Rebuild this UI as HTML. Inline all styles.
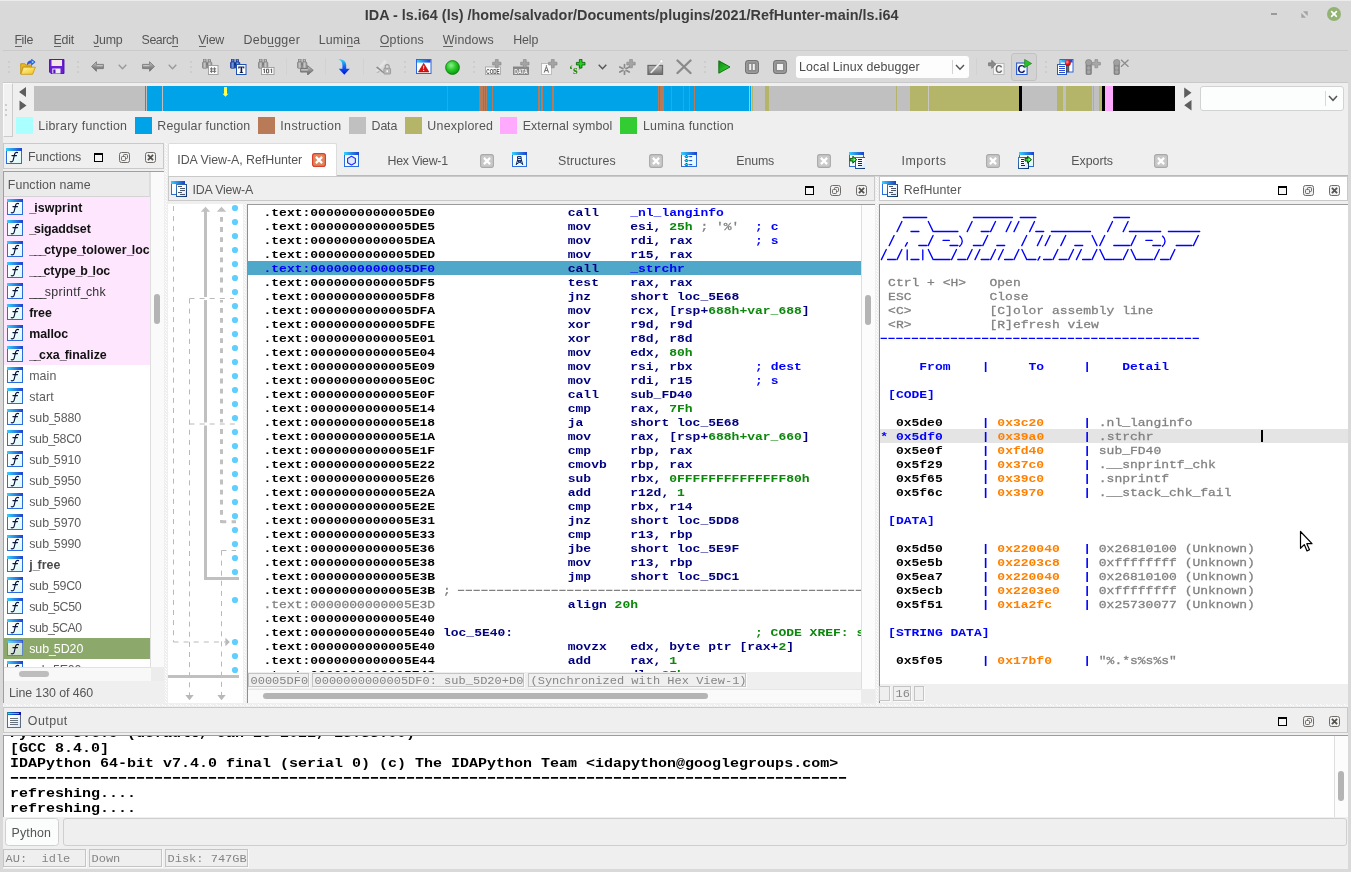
<!DOCTYPE html><html lang="en"><head><meta charset="utf-8"><title>IDA</title><style>
html,body{margin:0;padding:0}
body{width:1351px;height:872px;position:relative;overflow:hidden;background:#d9d9d9;font-family:"Liberation Sans",sans-serif;font-size:12.4px;color:#555}
div,.t,svg,pre{position:absolute;box-sizing:border-box}
.t{white-space:pre}
pre{margin:0;font-family:"Liberation Mono",monospace;font-weight:bold;white-space:pre}
pre b{font-weight:bold}
pre i{font-style:normal;font-weight:normal}
.m{font-family:"Liberation Mono",monospace;white-space:pre}
.dotv{background:linear-gradient(#fff 0 1px,transparent 1px) 1px 0/1px 3px repeat-y,linear-gradient(#fff 0 1px,transparent 1px) 2px 1px/1px 3px repeat-y,#efefef}
.doth{background:linear-gradient(90deg,#fff 0 1px,transparent 1px) 0 2px/6px 1px repeat-x,linear-gradient(90deg,#fff 0 1px,transparent 1px) 3px 1px/6px 1px repeat-x,linear-gradient(90deg,#fff 0 1px,transparent 1px) 4px 2px/6px 1px repeat-x,#efefef}
.sb{border:1px solid #c4c4c4;box-shadow:1px 1px 0 #fafafa;color:#858585;font-family:"Liberation Mono",monospace;font-size:12px;line-height:14px;white-space:pre;overflow:hidden}
.sb span{position:absolute;left:1.5px;line-height:14px;transform:scaleY(.87);transform-origin:0 100%}
</style></head><body><div id="root" style="left:0;top:0;width:1351px;height:872px;will-change:transform">
<div style="left:0px;top:0px;width:1351px;height:1px;background:#ececec"></div>
<span class="t" style="left:364.8px;top:6.3px;line-height:18px;font-size:14.4px;color:#3c3c3c;font-weight:bold;">IDA - ls.i64 (ls) /home/salvador/Documents/plugins/2021/RefHunter-main/ls.i64</span>
<div style="left:1270.5px;top:13px;width:6.5px;height:2px;background:#9a9a9a"></div>
<svg style="left:1300.5px;top:10.5px" width="7" height="7" viewBox="0 0 7 7"><path d="M2 0.3h4.7v4.7z M0.3 2v4.7h4.7z" fill="#a2a2a2"/></svg>
<svg style="left:1327px;top:6.5px" width="14" height="14" viewBox="0 0 14 14"><circle cx="7" cy="7" r="7" fill="#92b372"/><path d="M4.6 4.6l4.8 4.8M9.4 4.6l-4.8 4.8" stroke="#fff" stroke-width="1.6" stroke-linecap="round"/></svg>
<span class="t" style="left:14.4px;top:31.5px;line-height:16px;font-size:12.4px;color:#555;letter-spacing:-0.360px;">File</span>
<div style="left:15.1px;top:46px;width:6.43763px;height:1px;background:#666"></div>
<span class="t" style="left:53.5px;top:31.5px;line-height:16px;font-size:12.4px;color:#555;letter-spacing:-0.189px;">Edit</span>
<div style="left:54.2px;top:46px;width:7.03051px;height:1px;background:#666"></div>
<span class="t" style="left:93px;top:31.5px;line-height:16px;font-size:12.4px;color:#555;letter-spacing:-0.207px;">Jump</span>
<div style="left:93.7px;top:46px;width:5.27px;height:1px;background:#666"></div>
<span class="t" style="left:141.6px;top:31.5px;line-height:16px;font-size:12.4px;color:#555;letter-spacing:-0.457px;">Search</span>
<div style="left:172.404px;top:46px;width:5.86123px;height:1px;background:#666"></div>
<span class="t" style="left:198.3px;top:31.5px;line-height:16px;font-size:12.4px;color:#555;letter-spacing:-0.217px;">View</span>
<div style="left:199px;top:46px;width:7.03051px;height:1px;background:#666"></div>
<span class="t" style="left:243.6px;top:31.5px;line-height:16px;font-size:12.4px;color:#555;letter-spacing:0.249px;">Debugger</span>
<div style="left:267.793px;top:46px;width:5.86123px;height:1px;background:#666"></div>
<span class="t" style="left:318.7px;top:31.5px;line-height:16px;font-size:12.4px;color:#555;letter-spacing:0.187px;">Lumina</span>
<div style="left:347.022px;top:46px;width:5.86123px;height:1px;background:#666"></div>
<span class="t" style="left:379.7px;top:31.5px;line-height:16px;font-size:12.4px;color:#555;letter-spacing:0.228px;">Options</span>
<div style="left:380.4px;top:46px;width:8.19814px;height:1px;background:#666"></div>
<span class="t" style="left:442.7px;top:31.5px;line-height:16px;font-size:12.4px;color:#555;letter-spacing:0.133px;">Windows</span>
<div style="left:443.4px;top:46px;width:9.94877px;height:1px;background:#666"></div>
<span class="t" style="left:513.2px;top:31.5px;line-height:16px;font-size:12.4px;color:#555;letter-spacing:-0.134px;">Help</span>
<div style="left:3px;top:50px;width:1345px;height:1px;background:#cacaca"></div>
<div style="left:3px;top:82px;width:1345px;height:1px;background:#c9c9c9"></div>
<div style="left:3px;top:83px;width:1345px;height:786px;background:#efefef"></div>
<div style="left:3px;top:83px;width:9.5px;height:53.5px;background:#f1f1f1;border:1px solid #fbfbfb;border-right-color:#cbcbcb;border-bottom-color:#cbcbcb"></div>
<div style="left:5px;top:104px;width:2px;height:2px;background:#cccccc"></div>
<div style="left:5px;top:109px;width:2px;height:2px;background:#cccccc"></div>
<div style="left:5px;top:114px;width:2px;height:2px;background:#cccccc"></div>
<svg width="0" height="0" style="left:0;top:0"><defs>
<linearGradient id="gTitle" x1="0" y1="0" x2="1" y2="0"><stop offset="0" stop-color="#30d4ff"/><stop offset="0.5" stop-color="#2a86e4"/><stop offset="1" stop-color="#1c3fd0"/></linearGradient>
<linearGradient id="gTitleD" x1="0" y1="0" x2="1" y2="0"><stop offset="0" stop-color="#0a9aa8"/><stop offset="0.4" stop-color="#0a50c8"/><stop offset="1" stop-color="#0a10a0"/></linearGradient>
<linearGradient id="gIn" x1="0" y1="0" x2="1" y2="1"><stop offset="0.2" stop-color="#ffffff"/><stop offset="1" stop-color="#d8f8fa"/></linearGradient>
<linearGradient id="gInS" x1="0" y1="0" x2="1" y2="1"><stop offset="0.2" stop-color="#e6efdc"/><stop offset="1" stop-color="#c4dcc8"/></linearGradient>
<linearGradient id="gDoc" x1="0" y1="0" x2="1" y2="1"><stop offset="0.3" stop-color="#ffffff"/><stop offset="1" stop-color="#d6e6fc"/></linearGradient>
<linearGradient id="gDocB" x1="0" y1="0" x2="1" y2="1"><stop offset="0" stop-color="#3c78c0"/><stop offset="1" stop-color="#0c346c"/></linearGradient>
<linearGradient id="gFold" x1="0" y1="0" x2="1" y2="1"><stop offset="0" stop-color="#fff6a0"/><stop offset="1" stop-color="#f2c21c"/></linearGradient>
<linearGradient id="gGrey" x1="0" y1="0" x2="0" y2="1"><stop offset="0" stop-color="#b8b8b8"/><stop offset="1" stop-color="#6e6e6e"/></linearGradient>
<linearGradient id="gGreyH" x1="0" y1="0" x2="0" y2="1"><stop offset="0" stop-color="#cfcfcf"/><stop offset="0.55" stop-color="#8c8c8c"/><stop offset="1" stop-color="#6a6a6a"/></linearGradient>
<linearGradient id="gBlueArr" x1="0" y1="0" x2="0" y2="1"><stop offset="0" stop-color="#38d8f0"/><stop offset="0.5" stop-color="#1060f0"/><stop offset="1" stop-color="#0010e0"/></linearGradient>
<radialGradient id="gGreen" cx="0.4" cy="0.35" r="0.7"><stop offset="0" stop-color="#8cf08c"/><stop offset="0.5" stop-color="#28c828"/><stop offset="1" stop-color="#0a900a"/></radialGradient>
<radialGradient id="gRed" cx="0.4" cy="0.35" r="0.7"><stop offset="0" stop-color="#ff9a9a"/><stop offset="0.5" stop-color="#f01818"/><stop offset="1" stop-color="#a00000"/></radialGradient>
<linearGradient id="gPlay" x1="0" y1="0" x2="1" y2="1"><stop offset="0" stop-color="#0a8a0a"/><stop offset="1" stop-color="#3ee03e"/></linearGradient>
<linearGradient id="gBino" x1="0" y1="0" x2="1" y2="0"><stop offset="0" stop-color="#8a8a8a"/><stop offset="0.5" stop-color="#c8c8c8"/><stop offset="1" stop-color="#8a8a8a"/></linearGradient>
<linearGradient id="gBinoB" x1="0" y1="0" x2="1" y2="0"><stop offset="0" stop-color="#1a3c9c"/><stop offset="0.5" stop-color="#6fa0e8"/><stop offset="1" stop-color="#1a3c9c"/></linearGradient>
</defs></svg>
<div style="left:8px;top:61px;width:2px;height:2px;background:#cdcdcd"></div>
<div style="left:8px;top:66px;width:2px;height:2px;background:#cdcdcd"></div>
<div style="left:8px;top:71px;width:2px;height:2px;background:#cdcdcd"></div>
<svg style="left:20px;top:59px" width="16" height="16" viewBox="0 0 16 16" ><path d="M0.7 4.7h4.2l1 1.3h5.6v2H3.2L0.7 15z" fill="#e8b820" stroke="#c28c08" stroke-width=".8"/><path d="M3.4 8.2h12L12.6 15.3H0.8z" fill="url(#gFold)" stroke="#c89410" stroke-width=".8"/><path d="M7.3 5.6c0-3 2-4 4.3-3.8V0.2l3.6 2.9-3.6 2.9V4.3C9.8 4 8.6 4.4 7.3 5.6z" fill="#2a5cf0" stroke="#1030b0" stroke-width=".5"/><path d="M11.8 1.5l2.3 1.6-2.3 1.4z" fill="#7fe0ff"/></svg>
<svg style="left:49px;top:59px" width="16" height="15" viewBox="0 0 16 15" ><path d="M0.5 0.5h14.5v14H2L0.5 13z" fill="#6a1ed2" stroke="#4a10a8" stroke-width=".9"/><rect x="2.5" y="1" width="10.5" height="6" fill="#f4e6e6"/><rect x="2.5" y="1" width="10.5" height="6" fill="url(#gSv)"/><rect x="3.3" y="9.5" width="8.2" height="5" fill="#efeaf8"/><rect x="4.3" y="10.5" width="2.2" height="3.8" fill="#5a18c0"/></svg>
<div style="left:76.6px;top:61px;width:2px;height:2px;background:#cdcdcd"></div>
<div style="left:76.6px;top:66px;width:2px;height:2px;background:#cdcdcd"></div>
<div style="left:76.6px;top:71px;width:2px;height:2px;background:#cdcdcd"></div>
<svg style="left:91px;top:61px" width="13" height="11" viewBox="0 0 13 11" ><path d="M0.6 5.5L5.4 0.7v2.7h7v4.2h-7v2.7z" fill="url(#gGreyH)" stroke="#707070" stroke-width=".8"/><path d="M5.8 4.2h6v1h-6z" fill="#d0d0d0"/></svg>
<svg style="left:118.4px;top:64.3px" width="9" height="6" viewBox="0 0 9 6" ><path d="M0.7 0.7l3.8 4 3.8-4" fill="none" stroke="#9a9a9a" stroke-width="1.4"/></svg>
<svg style="left:141.8px;top:61px" width="13" height="11" viewBox="0 0 13 11" ><path d="M12.4 5.5L7.6 0.7v2.7h-7v4.2h7v2.7z" fill="url(#gGreyH)" stroke="#707070" stroke-width=".8"/><path d="M1.2 4.2h6v1h-6z" fill="#d0d0d0"/></svg>
<svg style="left:168.2px;top:64.3px" width="9" height="6" viewBox="0 0 9 6" ><path d="M0.7 0.7l3.8 4 3.8-4" fill="none" stroke="#9a9a9a" stroke-width="1.4"/></svg>
<div style="left:190px;top:61px;width:2px;height:2px;background:#cdcdcd"></div>
<div style="left:190px;top:66px;width:2px;height:2px;background:#cdcdcd"></div>
<div style="left:190px;top:71px;width:2px;height:2px;background:#cdcdcd"></div>
<svg style="left:202px;top:59px" width="17" height="16" viewBox="0 0 17 16" ><rect x="1.5" y="0.5" width="2.6" height="2.5" fill="url(#gBino)" stroke="#7c7c7c" stroke-width=".6"/><rect x="6" y="0.5" width="2.6" height="2.5" fill="url(#gBino)" stroke="#7c7c7c" stroke-width=".6"/><rect x="0.4" y="3" width="4.6" height="6.3" rx="1" fill="url(#gBino)" stroke="#7c7c7c" stroke-width=".7"/><rect x="5.2" y="3" width="4.6" height="6.3" rx="1" fill="url(#gBino)" stroke="#7c7c7c" stroke-width=".7"/><rect x="4.2" y="4" width="1.8" height="2.2" fill="#7c7c7c"/><rect x="6.5" y="6.5" width="9.5" height="9" fill="#fbfbfb" stroke="#9a9a9a" stroke-width=".9"/><path d="M9.4 8.3v5.6M12.6 8.3v5.6M8 9.9h6.2M8 12.3h6.2" stroke="#6a6a6a" stroke-width="1"/></svg>
<svg style="left:230px;top:59px" width="17" height="16" viewBox="0 0 17 16" ><rect x="1.5" y="0.5" width="2.6" height="2.5" fill="url(#gBinoB)" stroke="#16328a" stroke-width=".6"/><rect x="6" y="0.5" width="2.6" height="2.5" fill="url(#gBinoB)" stroke="#16328a" stroke-width=".6"/><rect x="0.4" y="3" width="4.6" height="6.3" rx="1" fill="url(#gBinoB)" stroke="#16328a" stroke-width=".7"/><rect x="5.2" y="3" width="4.6" height="6.3" rx="1" fill="url(#gBinoB)" stroke="#16328a" stroke-width=".7"/><rect x="4.2" y="4" width="1.8" height="2.2" fill="#16328a"/><rect x="6.5" y="5.5" width="9.5" height="10" fill="#fff" stroke="#2050b0" stroke-width="1"/><path d="M8.3 7.5h6v2h-0.8l-.3-1h-1v4.6l1 .3v.7H9.6v-.7l1-.3V8.5h-1l-.3 1H8.3z" fill="#0a1a50"/></svg>
<svg style="left:258px;top:59px" width="17" height="16" viewBox="0 0 17 16" ><rect x="1.5" y="0.5" width="2.6" height="2.5" fill="url(#gBino)" stroke="#7c7c7c" stroke-width=".6"/><rect x="6" y="0.5" width="2.6" height="2.5" fill="url(#gBino)" stroke="#7c7c7c" stroke-width=".6"/><rect x="0.4" y="3" width="4.6" height="6.3" rx="1" fill="url(#gBino)" stroke="#7c7c7c" stroke-width=".7"/><rect x="5.2" y="3" width="4.6" height="6.3" rx="1" fill="url(#gBino)" stroke="#7c7c7c" stroke-width=".7"/><rect x="4.2" y="4" width="1.8" height="2.2" fill="#7c7c7c"/><rect x="3.5" y="8.5" width="12.5" height="7" fill="#fbfbfb" stroke="#9a9a9a" stroke-width=".9"/><path d="M5.4 10.6l1-.6v4M8.5 10.2h2.2v3.6H8.5zM12.6 10.6l1-.6v4" stroke="#5a5a5a" stroke-width="1" fill="none"/></svg>
<div style="left:285.5px;top:58px;width:1px;height:17px;background:#d2d2d2"></div>
<svg style="left:297px;top:59px" width="17" height="16" viewBox="0 0 17 16" ><rect x="1.5" y="0.5" width="2.6" height="2.5" fill="url(#gBino)" stroke="#7c7c7c" stroke-width=".6"/><rect x="6" y="0.5" width="2.6" height="2.5" fill="url(#gBino)" stroke="#7c7c7c" stroke-width=".6"/><rect x="0.4" y="3" width="4.6" height="6.3" rx="1" fill="url(#gBino)" stroke="#7c7c7c" stroke-width=".7"/><rect x="5.2" y="3" width="4.6" height="6.3" rx="1" fill="url(#gBino)" stroke="#7c7c7c" stroke-width=".7"/><rect x="4.2" y="4" width="1.8" height="2.2" fill="#7c7c7c"/><path d="M3.6 9.5h7V6.6l5.6 4.7-5.6 4.7v-2.9h-7z" fill="url(#gGreyH)" stroke="#6c6c6c" stroke-width=".8"/><path d="M4.2 10.4h6.8v1H4.2z" fill="#d6d6d6"/></svg>
<div style="left:324.5px;top:58px;width:1px;height:17px;background:#d2d2d2"></div>
<svg style="left:338px;top:59px" width="13" height="16" viewBox="0 0 13 16" ><path d="M0.3 0.2C4.5 0 7.8 1.5 8.2 6v3.7h3.6L6.3 15.8 0.8 9.7h3.6V6C4.3 3 3 1.3 0.3 0.2z" fill="url(#gBlueArr)"/></svg>
<div style="left:363px;top:58px;width:1px;height:17px;background:#d2d2d2"></div>
<svg style="left:375px;top:59px" width="17" height="16" viewBox="0 0 17 16" ><path d="M9.5 0.5L12 3 3.5 11.5 0.5 12.5z" fill="#e4e4e4"/><path d="M2.5 7.5l7 6.2-1.5.2L1 8.5z" fill="#8a8a8a"/><path d="M1 14l3-1.8.8.9z" fill="#9a9a9a"/><path d="M10.2 9.5V7.6a2 2 0 0 1 4 0v1.9" fill="none" stroke="#9a9a9a" stroke-width="1.1"/><rect x="8.8" y="9.3" width="6.8" height="5.8" rx=".8" fill="#b8b8b8" stroke="#8c8c8c" stroke-width=".7"/><rect x="11.5" y="11.2" width="1.4" height="2" fill="#fff"/></svg>
<div style="left:404px;top:61px;width:2px;height:2px;background:#cdcdcd"></div>
<div style="left:404px;top:66px;width:2px;height:2px;background:#cdcdcd"></div>
<div style="left:404px;top:71px;width:2px;height:2px;background:#cdcdcd"></div>
<svg style="left:416px;top:59px" width="16" height="15" viewBox="0 0 16 15" ><rect x=".5" y=".5" width="14.5" height="14" fill="#fff" stroke="#2a66e0" stroke-width="1"/><rect x="1" y="1" width="13.5" height="2.6" fill="url(#gTitle)"/><path d="M7.7 4.2L13 13H2.4z" fill="#d81010" stroke="#a00000" stroke-width=".5"/><path d="M7.2 6.8h1l-.2 3.4h-.6zM7.2 10.9h1v1h-1z" fill="#fff"/></svg>
<svg style="left:444.5px;top:59.7px" width="15" height="15" viewBox="0 0 15 15" ><circle cx="7.5" cy="7.5" r="6.9" fill="url(#gGreen)" stroke="#087808" stroke-width=".8"/></svg>
<div style="left:473px;top:61px;width:2px;height:2px;background:#cdcdcd"></div>
<div style="left:473px;top:66px;width:2px;height:2px;background:#cdcdcd"></div>
<div style="left:473px;top:71px;width:2px;height:2px;background:#cdcdcd"></div>
<svg style="left:485px;top:59px" width="17" height="16" viewBox="0 0 17 16" ><rect x=".5" y="8" width="15" height="7.5" fill="#fcfcfc" stroke="#a0a0a0" stroke-width=".8"/><path d="M10.4 0.4h2.8v2.8h2.8v2.8h-2.8v2.8h-2.8v-2.8h-2.8v-2.8h2.8z" fill="#a4a4a4" stroke="#858585" stroke-width=".6"/><text x="8" y="14.6" font-family="Liberation Sans" font-weight="bold" font-size="7.2" text-anchor="middle" fill="#505050" textLength="13.4" lengthAdjust="spacingAndGlyphs">CODE</text></svg>
<svg style="left:513px;top:59px" width="17" height="16" viewBox="0 0 17 16" ><rect x=".5" y="8" width="15" height="7.5" fill="#8a8a8a" stroke="#7a7a7a" stroke-width=".8"/><path d="M10.4 0.4h2.8v2.8h2.8v2.8h-2.8v2.8h-2.8v-2.8h-2.8v-2.8h2.8z" fill="#a4a4a4" stroke="#858585" stroke-width=".6"/><text x="8" y="14.6" font-family="Liberation Sans" font-weight="bold" font-size="7.2" text-anchor="middle" fill="#f4f4f4" textLength="13.4" lengthAdjust="spacingAndGlyphs">DATA</text></svg>
<svg style="left:541px;top:59px" width="17" height="16" viewBox="0 0 17 16" ><rect x=".5" y="4.5" width="10" height="11" fill="#fafafa" stroke="#b0b0b0" stroke-width=".8"/><path d="M5.4 6.2v1.2M3.2 13.6l2.2-6 2.2 6M4 11.6h2.8" fill="none" stroke="#6a6a6a" stroke-width="1"/><path d="M10.4 0.4h2.8v2.8h2.8v2.8h-2.8v2.8h-2.8v-2.8h-2.8v-2.8h2.8z" fill="#a4a4a4" stroke="#858585" stroke-width=".6"/></svg>
<svg style="left:569px;top:59px" width="18" height="16" viewBox="0 0 18 16" ><text x="0" y="15" font-family="Liberation Serif" font-weight="bold" font-size="12" fill="#2a8a10">‘s’</text><path d="M10.4 0.4h2.6v3h3v2.6h-3v3h-2.6v-3h-3V3.4h3z" fill="#22d022" stroke="#0a5a0a" stroke-width=".8"/></svg>
<svg style="left:598px;top:64.3px" width="9" height="6" viewBox="0 0 9 6" ><path d="M0.7 0.7l3.8 4 3.8-4" fill="none" stroke="#555" stroke-width="1.4"/></svg>
<svg style="left:619px;top:59px" width="17" height="16" viewBox="0 0 17 16" ><path d="M5.5 5.5v10M0.8 8l9.4 5M0.8 13l9.4-5" stroke="#8a8a8a" stroke-width="1.7" stroke-linecap="round"/><circle cx="5.5" cy="10.5" r="1.2" fill="#d9d9d9"/><path d="M10.6 0.4h2.8v2.8h2.8v2.8h-2.8v2.8h-2.8v-2.8h-2.8v-2.8h2.8z" fill="#a4a4a4" stroke="#858585" stroke-width=".6"/></svg>
<svg style="left:647px;top:59px" width="17" height="16" viewBox="0 0 17 16" ><rect x="1" y="6.5" width="14.5" height="9" fill="url(#gGrey)" stroke="#6a6a6a" stroke-width="1.3"/><path d="M3 13.5L13.5 2l1.5 1.3L4.5 14.2z" fill="#f4f4f4" stroke="#aaa" stroke-width=".4"/><circle cx="14.4" cy="2.2" r="1.5" fill="#fff" stroke="#bbb" stroke-width=".4"/></svg>
<svg style="left:675.5px;top:59px" width="16" height="16" viewBox="0 0 16 16" ><path d="M1.5 1.5l13 12.5M14.5 1.5l-13 12.5" stroke="#8a8a8a" stroke-width="2.3" stroke-linecap="round"/></svg>
<div style="left:704px;top:61px;width:2px;height:2px;background:#cdcdcd"></div>
<div style="left:704px;top:66px;width:2px;height:2px;background:#cdcdcd"></div>
<div style="left:704px;top:71px;width:2px;height:2px;background:#cdcdcd"></div>
<svg style="left:718px;top:60.3px" width="13" height="14" viewBox="0 0 13 14" ><path d="M0.8 0.8v12.4L12 7z" fill="url(#gPlay)" stroke="#0a6a0a" stroke-width=".9" stroke-linejoin="round"/></svg>
<svg style="left:745px;top:60px" width="14" height="14" viewBox="0 0 14 14" ><rect x=".6" y=".6" width="12.8" height="12.8" rx="2.2" fill="#8a8a8a" stroke="#6e6e6e" stroke-width="1"/><rect x="1.8" y="1.8" width="10.4" height="10.4" rx="1.5" fill="none" stroke="#a8a8a8" stroke-width=".9"/><rect x="4.2" y="4" width="2" height="6" fill="#f0f0f0"/><rect x="7.8" y="4" width="2" height="6" fill="#f0f0f0"/></svg>
<svg style="left:773px;top:60px" width="14" height="14" viewBox="0 0 14 14" ><rect x=".6" y=".6" width="12.8" height="12.8" rx="2.2" fill="#8a8a8a" stroke="#6e6e6e" stroke-width="1"/><rect x="1.8" y="1.8" width="10.4" height="10.4" rx="1.5" fill="none" stroke="#a8a8a8" stroke-width=".9"/><rect x="4" y="4" width="6" height="6" fill="#f2f2f2"/></svg>
<div style="left:796px;top:56px;width:173px;height:21.5px;background:#fdfdfd;border-radius:3px"></div>
<span class="t" style="left:799.1px;top:58.7px;line-height:16px;font-size:12.4px;color:#4a4a4a;letter-spacing:0.112px;">Local Linux debugger</span>
<div style="left:951.5px;top:59.5px;width:1px;height:14.5px;background:#d4d4d4"></div>
<svg style="left:955px;top:63.5px" width="10" height="7" viewBox="0 0 10 7" ><path d="M1 1l4 4.2L9 1" fill="none" stroke="#555" stroke-width="1.4"/></svg>
<div style="left:975.5px;top:58px;width:1px;height:17px;background:#d2d2d2"></div>
<svg style="left:988px;top:59px" width="17" height="16" viewBox="0 0 17 16" ><rect x="5.5" y="4.5" width="10.5" height="11" fill="#f6f6f6" stroke="#b0b0b0" stroke-width=".8"/><path d="M0.5 3.8h3.2V1.2L8 5.3 3.7 9.4V6.8H0.5z" fill="#8a8a8a" stroke="#6a6a6a" stroke-width=".6"/><text x="7.2" y="14" font-family="Liberation Sans" font-weight="bold" font-size="10" fill="#6a6a6a">C</text></svg>
<div style="left:1011px;top:53px;width:26px;height:28px;background:#d3d3d3;border:1px solid #c2c2c2;border-radius:3px"></div>
<svg style="left:1016px;top:59px" width="17" height="16" viewBox="0 0 17 16" ><rect x=".6" y="4" width="10.5" height="11.5" fill="#f6f8ff" stroke="#2a5cd0" stroke-width="1.1"/><text x="1.6" y="14" font-family="Liberation Sans" font-weight="bold" font-size="11" fill="#0a1470">C</text><path d="M8.6 0.4v8.3l7-4.2z" fill="#28c028" stroke="#0a7a0a" stroke-width=".6"/></svg>
<div style="left:1045px;top:61px;width:2px;height:2px;background:#cdcdcd"></div>
<div style="left:1045px;top:66px;width:2px;height:2px;background:#cdcdcd"></div>
<div style="left:1045px;top:71px;width:2px;height:2px;background:#cdcdcd"></div>
<svg style="left:1057px;top:59px" width="17" height="16" viewBox="0 0 17 16" ><rect x="3" y=".5" width="13" height="12.5" fill="#fff" stroke="#2a66e0" stroke-width="1"/><rect x="3.5" y="1" width="12" height="2.5" fill="url(#gTitle)"/><rect x=".5" y="5.5" width="9" height="10" fill="#fff" stroke="#2a5cc0" stroke-width="1"/><path d="M2 7.5h6M2 9.5h6M2 11.5h6M2 13.5h6" stroke="#2a4cd0" stroke-width="1" shape-rendering="crispEdges"/><rect x="9.4" y="6" width="2.6" height="7" fill="#666" stroke="#333" stroke-width=".4"/><circle cx="10.8" cy="4" r="3" fill="url(#gRed)"/></svg>
<svg style="left:1085px;top:59px" width="17" height="16" viewBox="0 0 17 16" ><rect x="1" y="5" width="5.4" height="10.5" rx="1" fill="#8a8a8a" stroke="#6e6e6e" stroke-width=".6"/><circle cx="3.7" cy="3.6" r="3.2" fill="#a0a0a0" stroke="#7c7c7c" stroke-width=".6"/><circle cx="3.7" cy="9" r="1.7" fill="#a6a6a6"/><circle cx="3.7" cy="13" r="1.7" fill="#a6a6a6"/><path d="M9.93333 0.6h2.73333v2.73333h2.73333v2.73333h-2.73333v2.73333h-2.73333v-2.73333h-2.73333v-2.73333h2.73333z" fill="#a8a8a8" stroke="#858585" stroke-width=".6"/></svg>
<svg style="left:1113px;top:59px" width="17" height="16" viewBox="0 0 17 16" ><rect x="1" y="5" width="5.4" height="10.5" rx="1" fill="#8a8a8a" stroke="#6e6e6e" stroke-width=".6"/><circle cx="3.7" cy="3.6" r="3.2" fill="#a0a0a0" stroke="#7c7c7c" stroke-width=".6"/><circle cx="3.7" cy="9" r="1.7" fill="#a6a6a6"/><circle cx="3.7" cy="13" r="1.7" fill="#a6a6a6"/><path d="M8 0.8l7.5 7M15.5 0.8l-7.5 7" stroke="#8a8a8a" stroke-width="1.2"/></svg>
<svg style="left:18px;top:86px" width="10" height="26" viewBox="0 0 10 26"><path d="M8 1v10L1 6zM1.5 14.5v10L8.5 19.5z" fill="#5e5e5e"/></svg>
<svg style="left:1183px;top:86px" width="10" height="26" viewBox="0 0 10 26"><path d="M1.2 1.5v10.5L8.5 6.7zM8.5 14v10.6L1.2 19.3z" fill="#5e5e5e"/></svg>
<svg style="left:34px;top:86px" width="1141" height="25" viewBox="0 0 1141 25" shape-rendering="crispEdges"><rect x="0" y="0" width="111" height="25" fill="#c0c0c0"/><rect x="111" y="0" width="1" height="25" fill="#00a2e8"/><rect x="112" y="0" width="1" height="25" fill="#c0c0c0"/><rect x="113" y="0" width="602" height="25" fill="#00a2e8"/><rect x="128" y="0" width="1" height="25" fill="#c0c0c0"/><rect x="413" y="0" width="1" height="25" fill="#b87a57"/><rect x="445" y="0" width="4" height="25" fill="#b87a57"/><rect x="450" y="0" width="1" height="25" fill="#b87a57"/><rect x="452" y="0" width="1" height="25" fill="#b87a57"/><rect x="458" y="0" width="1" height="25" fill="#b87a57"/><rect x="504" y="0" width="2" height="25" fill="#b87a57"/><rect x="507" y="0" width="2" height="25" fill="#b87a57"/><rect x="518" y="0" width="2" height="25" fill="#b87a57"/><rect x="624" y="0" width="1" height="25" fill="#b87a57"/><rect x="626" y="0" width="4" height="25" fill="#b87a57"/><rect x="637" y="0" width="1" height="25" fill="#b87a57"/><rect x="649" y="0" width="1" height="25" fill="#b87a57"/><rect x="655" y="0" width="1" height="25" fill="#b87a57"/><rect x="660" y="0" width="1" height="25" fill="#b87a57"/><rect x="715" y="0" width="161" height="25" fill="#c0c0c0"/><rect x="716" y="0" width="1" height="25" fill="#00a2e8"/><rect x="718" y="0" width="1" height="25" fill="#b5b56a"/><rect x="731" y="0" width="4" height="25" fill="#b5b56a"/><rect x="862" y="0" width="1" height="25" fill="#b5b56a"/><rect x="876" y="0" width="108.7" height="25" fill="#b5b56a"/><rect x="894" y="0" width="1" height="25" fill="#c8c8c0"/><rect x="984.7" y="0" width="3.3" height="25" fill="#000"/><rect x="988" y="0" width="35" height="25" fill="#c0c0c0"/><rect x="1023" y="0" width="6" height="25" fill="#b5b56a"/><rect x="1029" y="0" width="2.7" height="25" fill="#c0c0c0"/><rect x="1031.7" y="0" width="28.3" height="25" fill="#b5b56a"/><rect x="1058.2" y="0" width="0.8" height="25" fill="#c0c0c0"/><rect x="1060" y="0" width="5" height="25" fill="#c0c0c0"/><rect x="1065" y="0" width="2.8" height="25" fill="#b5b56a"/><rect x="1067.8" y="0" width="3.2" height="25" fill="#000"/><rect x="1071" y="0" width="8" height="25" fill="#ffaaff"/><rect x="1079" y="0" width="62" height="25" fill="#000"/></svg>
<svg style="left:222px;top:87px" width="7" height="10" viewBox="0 0 7 10"><path d="M2 0h3v6.8h1.4L3.5 9.8 0.6 6.8H2z" fill="#ffff50"/></svg>
<div style="left:1200px;top:86px;width:144px;height:25px;background:#fcfdfd;border:1px solid #d2d2d2;border-radius:3px"></div>
<div style="left:1325px;top:91px;width:1px;height:15px;background:#d8d8d8"></div>
<svg style="left:1328px;top:94.5px" width="10" height="7" viewBox="0 0 10 7"><path d="M1 1l4 4.3L9 1" fill="none" stroke="#555" stroke-width="1.5"/></svg>
<div style="left:16px;top:117px;width:17px;height:17px;background:#aaffff"></div>
<span class="t" style="left:38.3px;top:118.2px;line-height:16px;font-size:12.4px;color:#555;letter-spacing:0.262px;">Library function</span>
<div style="left:135px;top:117px;width:17px;height:17px;background:#00a2e8"></div>
<span class="t" style="left:157.3px;top:118.2px;line-height:16px;font-size:12.4px;color:#555;letter-spacing:0.180px;">Regular function</span>
<div style="left:258px;top:117px;width:17px;height:17px;background:#b87a57"></div>
<span class="t" style="left:280.3px;top:118.2px;line-height:16px;font-size:12.4px;color:#555;letter-spacing:0.380px;">Instruction</span>
<div style="left:349px;top:117px;width:17px;height:17px;background:#c0c0c0"></div>
<span class="t" style="left:371.6px;top:118.2px;line-height:16px;font-size:12.4px;color:#555;letter-spacing:-0.164px;">Data</span>
<div style="left:405px;top:117px;width:17px;height:17px;background:#b5b56a"></div>
<span class="t" style="left:427.3px;top:118.2px;line-height:16px;font-size:12.4px;color:#555;letter-spacing:0.254px;">Unexplored</span>
<div style="left:500px;top:117px;width:17px;height:17px;background:#ffaaff"></div>
<span class="t" style="left:522.7px;top:118.2px;line-height:16px;font-size:12.4px;color:#555;letter-spacing:0.100px;">External symbol</span>
<div style="left:620px;top:117px;width:17px;height:17px;background:#33cc33"></div>
<span class="t" style="left:642.9px;top:118.2px;line-height:16px;font-size:12.4px;color:#555;letter-spacing:0.240px;">Lumina function</span>
<div style="left:3px;top:143px;width:161px;height:26px;border:1px solid #c9c9c9;background:#efefef"></div>
<svg style="left:6px;top:148px" width="16" height="16" viewBox="0 0 16 16" ><rect x=".5" y=".5" width="15" height="15" fill="url(#gIn)" stroke="#2c6cdc" stroke-width="1"/><rect x="0" y="0" width="16" height="3" fill="url(#gTitle)"/><path d="M11.6 4.6c-1.7-.5-2.7.2-3.1 2L7.2 12.2c-.3 1.3-1.2 1.9-2.9 1.5" fill="none" stroke="#0a1238" stroke-width="1.15" stroke-linecap="round"/><path d="M5.9 7.6h4.6" stroke="#0a1238" stroke-width="1.1" stroke-linecap="round"/></svg>
<span class="t" style="left:28px;top:149.3px;line-height:16px;font-size:12.4px;color:#555;letter-spacing:-0.057px;">Functions</span>
<svg style="left:94px;top:153px" width="9" height="9" viewBox="0 0 9 9" ><rect x=".5" y=".5" width="8" height="8" fill="#f6f6f6" stroke="#000" stroke-width="1"/><rect x="0" y="0" width="9" height="2" fill="#000"/></svg>
<svg style="left:119px;top:152px" width="11" height="11" viewBox="0 0 11 11" ><rect x=".5" y=".5" width="10" height="10" rx="2" fill="#f1f1f1" stroke="#6e6b68" stroke-width="1"/><rect x="4.5" y="2.5" width="4" height="4" rx=".8" fill="none" stroke="#6e6b68" stroke-width="1"/><rect x="2.5" y="4.5" width="4" height="4" rx=".8" fill="#f1f1f1" stroke="#6e6b68" stroke-width="1"/></svg>
<svg style="left:145px;top:152px" width="11" height="11" viewBox="0 0 11 11" ><rect x=".5" y=".5" width="10" height="10" rx="2" fill="#f1f1f1" stroke="#6e6b68" stroke-width="1"/><path d="M2.9 2.9l5.2 5.2M8.1 2.9L2.9 8.1" stroke="#55534f" stroke-width="1.8"/></svg>
<div style="left:3px;top:171px;width:161px;height:533px;background:#fff"></div>
<div style="left:3px;top:171px;width:161px;height:1px;background:#9f9f9f"></div>
<div style="left:3px;top:171px;width:1px;height:533px;background:#9f9f9f"></div>
<div style="left:4px;top:172px;width:146px;height:24.5px;background:#ebebeb;border-bottom:1px solid #d4d4d4;border-right:1px solid #dcdcdc"></div>
<span class="t" style="left:7.8px;top:176.6px;line-height:16px;font-size:12.4px;color:#555;letter-spacing:0.074px;">Function name</span>
<div style="left:4px;top:197px;width:146px;height:168px;background:#fde6fe"></div>
<div style="left:4px;top:197px;width:146px;height:470px;overflow:hidden">
<svg style="left:3px;top:2px" width="16" height="16" viewBox="0 0 16 16" ><rect x=".5" y=".5" width="15" height="15" fill="url(#gIn)" stroke="#2c6cdc" stroke-width="1"/><rect x="0" y="0" width="16" height="3" fill="url(#gTitle)"/><path d="M11.6 4.6c-1.7-.5-2.7.2-3.1 2L7.2 12.2c-.3 1.3-1.2 1.9-2.9 1.5" fill="none" stroke="#0a1238" stroke-width="1.15" stroke-linecap="round"/><path d="M5.9 7.6h4.6" stroke="#0a1238" stroke-width="1.1" stroke-linecap="round"/></svg>
<span class="t" style="left:25.2px;top:2.8px;line-height:16px;font-size:12.4px;color:#111;font-weight:bold;letter-spacing:0.084px;"><span style="letter-spacing:-1.916px">_</span>iswprint</span>
<svg style="left:3px;top:23px" width="16" height="16" viewBox="0 0 16 16" ><rect x=".5" y=".5" width="15" height="15" fill="url(#gIn)" stroke="#2c6cdc" stroke-width="1"/><rect x="0" y="0" width="16" height="3" fill="url(#gTitle)"/><path d="M11.6 4.6c-1.7-.5-2.7.2-3.1 2L7.2 12.2c-.3 1.3-1.2 1.9-2.9 1.5" fill="none" stroke="#0a1238" stroke-width="1.15" stroke-linecap="round"/><path d="M5.9 7.6h4.6" stroke="#0a1238" stroke-width="1.1" stroke-linecap="round"/></svg>
<span class="t" style="left:25.2px;top:23.8px;line-height:16px;font-size:12.4px;color:#111;font-weight:bold;letter-spacing:-0.130px;"><span style="letter-spacing:-2.130px">_</span>sigaddset</span>
<svg style="left:3px;top:44px" width="16" height="16" viewBox="0 0 16 16" ><rect x=".5" y=".5" width="15" height="15" fill="url(#gIn)" stroke="#2c6cdc" stroke-width="1"/><rect x="0" y="0" width="16" height="3" fill="url(#gTitle)"/><path d="M11.6 4.6c-1.7-.5-2.7.2-3.1 2L7.2 12.2c-.3 1.3-1.2 1.9-2.9 1.5" fill="none" stroke="#0a1238" stroke-width="1.15" stroke-linecap="round"/><path d="M5.9 7.6h4.6" stroke="#0a1238" stroke-width="1.1" stroke-linecap="round"/></svg>
<span class="t" style="left:25.2px;top:44.8px;line-height:16px;font-size:12.4px;color:#111;font-weight:bold;letter-spacing:0.091px;"><span style="letter-spacing:-1.909px">_</span><span style="letter-spacing:-1.909px">_</span><span style="letter-spacing:-1.909px">_</span>ctype<span style="letter-spacing:-1.909px">_</span>tolower<span style="letter-spacing:-1.909px">_</span>loc</span>
<svg style="left:3px;top:65px" width="16" height="16" viewBox="0 0 16 16" ><rect x=".5" y=".5" width="15" height="15" fill="url(#gIn)" stroke="#2c6cdc" stroke-width="1"/><rect x="0" y="0" width="16" height="3" fill="url(#gTitle)"/><path d="M11.6 4.6c-1.7-.5-2.7.2-3.1 2L7.2 12.2c-.3 1.3-1.2 1.9-2.9 1.5" fill="none" stroke="#0a1238" stroke-width="1.15" stroke-linecap="round"/><path d="M5.9 7.6h4.6" stroke="#0a1238" stroke-width="1.1" stroke-linecap="round"/></svg>
<span class="t" style="left:25.2px;top:65.8px;line-height:16px;font-size:12.4px;color:#111;font-weight:bold;letter-spacing:-0.097px;"><span style="letter-spacing:-2.097px">_</span><span style="letter-spacing:-2.097px">_</span><span style="letter-spacing:-2.097px">_</span>ctype<span style="letter-spacing:-2.097px">_</span>b<span style="letter-spacing:-2.097px">_</span>loc</span>
<svg style="left:3px;top:86px" width="16" height="16" viewBox="0 0 16 16" ><rect x=".5" y=".5" width="15" height="15" fill="url(#gIn)" stroke="#2c6cdc" stroke-width="1"/><rect x="0" y="0" width="16" height="3" fill="url(#gTitle)"/><path d="M11.6 4.6c-1.7-.5-2.7.2-3.1 2L7.2 12.2c-.3 1.3-1.2 1.9-2.9 1.5" fill="none" stroke="#0a1238" stroke-width="1.15" stroke-linecap="round"/><path d="M5.9 7.6h4.6" stroke="#0a1238" stroke-width="1.1" stroke-linecap="round"/></svg>
<span class="t" style="left:25.2px;top:86.8px;line-height:16px;font-size:12.4px;color:#333;letter-spacing:0.304px;"><span style="letter-spacing:-1.696px">_</span><span style="letter-spacing:-1.696px">_</span><span style="letter-spacing:-1.696px">_</span>sprintf<span style="letter-spacing:-1.696px">_</span>chk</span>
<svg style="left:3px;top:107px" width="16" height="16" viewBox="0 0 16 16" ><rect x=".5" y=".5" width="15" height="15" fill="url(#gIn)" stroke="#2c6cdc" stroke-width="1"/><rect x="0" y="0" width="16" height="3" fill="url(#gTitle)"/><path d="M11.6 4.6c-1.7-.5-2.7.2-3.1 2L7.2 12.2c-.3 1.3-1.2 1.9-2.9 1.5" fill="none" stroke="#0a1238" stroke-width="1.15" stroke-linecap="round"/><path d="M5.9 7.6h4.6" stroke="#0a1238" stroke-width="1.1" stroke-linecap="round"/></svg>
<span class="t" style="left:25.2px;top:107.8px;line-height:16px;font-size:12.4px;color:#111;font-weight:bold;letter-spacing:-0.049px;">free</span>
<svg style="left:3px;top:128px" width="16" height="16" viewBox="0 0 16 16" ><rect x=".5" y=".5" width="15" height="15" fill="url(#gIn)" stroke="#2c6cdc" stroke-width="1"/><rect x="0" y="0" width="16" height="3" fill="url(#gTitle)"/><path d="M11.6 4.6c-1.7-.5-2.7.2-3.1 2L7.2 12.2c-.3 1.3-1.2 1.9-2.9 1.5" fill="none" stroke="#0a1238" stroke-width="1.15" stroke-linecap="round"/><path d="M5.9 7.6h4.6" stroke="#0a1238" stroke-width="1.1" stroke-linecap="round"/></svg>
<span class="t" style="left:25.2px;top:128.8px;line-height:16px;font-size:12.4px;color:#111;font-weight:bold;letter-spacing:-0.036px;">malloc</span>
<svg style="left:3px;top:149px" width="16" height="16" viewBox="0 0 16 16" ><rect x=".5" y=".5" width="15" height="15" fill="url(#gIn)" stroke="#2c6cdc" stroke-width="1"/><rect x="0" y="0" width="16" height="3" fill="url(#gTitle)"/><path d="M11.6 4.6c-1.7-.5-2.7.2-3.1 2L7.2 12.2c-.3 1.3-1.2 1.9-2.9 1.5" fill="none" stroke="#0a1238" stroke-width="1.15" stroke-linecap="round"/><path d="M5.9 7.6h4.6" stroke="#0a1238" stroke-width="1.1" stroke-linecap="round"/></svg>
<span class="t" style="left:25.2px;top:149.8px;line-height:16px;font-size:12.4px;color:#111;font-weight:bold;letter-spacing:0.015px;"><span style="letter-spacing:-1.985px">_</span><span style="letter-spacing:-1.985px">_</span>cxa<span style="letter-spacing:-1.985px">_</span>finalize</span>
<svg style="left:3px;top:170px" width="16" height="16" viewBox="0 0 16 16" ><rect x=".5" y=".5" width="15" height="15" fill="url(#gIn)" stroke="#2c6cdc" stroke-width="1"/><rect x="0" y="0" width="16" height="3" fill="url(#gTitle)"/><path d="M11.6 4.6c-1.7-.5-2.7.2-3.1 2L7.2 12.2c-.3 1.3-1.2 1.9-2.9 1.5" fill="none" stroke="#0a1238" stroke-width="1.15" stroke-linecap="round"/><path d="M5.9 7.6h4.6" stroke="#0a1238" stroke-width="1.1" stroke-linecap="round"/></svg>
<span class="t" style="left:25.2px;top:170.8px;line-height:16px;font-size:12.4px;color:#5c5c5c;letter-spacing:0.075px;">main</span>
<svg style="left:3px;top:191px" width="16" height="16" viewBox="0 0 16 16" ><rect x=".5" y=".5" width="15" height="15" fill="url(#gIn)" stroke="#2c6cdc" stroke-width="1"/><rect x="0" y="0" width="16" height="3" fill="url(#gTitle)"/><path d="M11.6 4.6c-1.7-.5-2.7.2-3.1 2L7.2 12.2c-.3 1.3-1.2 1.9-2.9 1.5" fill="none" stroke="#0a1238" stroke-width="1.15" stroke-linecap="round"/><path d="M5.9 7.6h4.6" stroke="#0a1238" stroke-width="1.1" stroke-linecap="round"/></svg>
<span class="t" style="left:25.2px;top:191.8px;line-height:16px;font-size:12.4px;color:#5c5c5c;letter-spacing:0.121px;">start</span>
<svg style="left:3px;top:212px" width="16" height="16" viewBox="0 0 16 16" ><rect x=".5" y=".5" width="15" height="15" fill="url(#gIn)" stroke="#2c6cdc" stroke-width="1"/><rect x="0" y="0" width="16" height="3" fill="url(#gTitle)"/><path d="M11.6 4.6c-1.7-.5-2.7.2-3.1 2L7.2 12.2c-.3 1.3-1.2 1.9-2.9 1.5" fill="none" stroke="#0a1238" stroke-width="1.15" stroke-linecap="round"/><path d="M5.9 7.6h4.6" stroke="#0a1238" stroke-width="1.1" stroke-linecap="round"/></svg>
<span class="t" style="left:25.2px;top:212.8px;line-height:16px;font-size:12.4px;color:#5c5c5c;letter-spacing:-0.053px;">sub<span style="letter-spacing:-2.053px">_</span>5880</span>
<svg style="left:3px;top:233px" width="16" height="16" viewBox="0 0 16 16" ><rect x=".5" y=".5" width="15" height="15" fill="url(#gIn)" stroke="#2c6cdc" stroke-width="1"/><rect x="0" y="0" width="16" height="3" fill="url(#gTitle)"/><path d="M11.6 4.6c-1.7-.5-2.7.2-3.1 2L7.2 12.2c-.3 1.3-1.2 1.9-2.9 1.5" fill="none" stroke="#0a1238" stroke-width="1.15" stroke-linecap="round"/><path d="M5.9 7.6h4.6" stroke="#0a1238" stroke-width="1.1" stroke-linecap="round"/></svg>
<span class="t" style="left:25.2px;top:233.8px;line-height:16px;font-size:12.4px;color:#5c5c5c;letter-spacing:-0.275px;">sub<span style="letter-spacing:-2.276px">_</span>58C0</span>
<svg style="left:3px;top:254px" width="16" height="16" viewBox="0 0 16 16" ><rect x=".5" y=".5" width="15" height="15" fill="url(#gIn)" stroke="#2c6cdc" stroke-width="1"/><rect x="0" y="0" width="16" height="3" fill="url(#gTitle)"/><path d="M11.6 4.6c-1.7-.5-2.7.2-3.1 2L7.2 12.2c-.3 1.3-1.2 1.9-2.9 1.5" fill="none" stroke="#0a1238" stroke-width="1.15" stroke-linecap="round"/><path d="M5.9 7.6h4.6" stroke="#0a1238" stroke-width="1.1" stroke-linecap="round"/></svg>
<span class="t" style="left:25.2px;top:254.8px;line-height:16px;font-size:12.4px;color:#5c5c5c;letter-spacing:-0.053px;">sub<span style="letter-spacing:-2.053px">_</span>5910</span>
<svg style="left:3px;top:275px" width="16" height="16" viewBox="0 0 16 16" ><rect x=".5" y=".5" width="15" height="15" fill="url(#gIn)" stroke="#2c6cdc" stroke-width="1"/><rect x="0" y="0" width="16" height="3" fill="url(#gTitle)"/><path d="M11.6 4.6c-1.7-.5-2.7.2-3.1 2L7.2 12.2c-.3 1.3-1.2 1.9-2.9 1.5" fill="none" stroke="#0a1238" stroke-width="1.15" stroke-linecap="round"/><path d="M5.9 7.6h4.6" stroke="#0a1238" stroke-width="1.1" stroke-linecap="round"/></svg>
<span class="t" style="left:25.2px;top:275.8px;line-height:16px;font-size:12.4px;color:#5c5c5c;letter-spacing:-0.053px;">sub<span style="letter-spacing:-2.053px">_</span>5950</span>
<svg style="left:3px;top:296px" width="16" height="16" viewBox="0 0 16 16" ><rect x=".5" y=".5" width="15" height="15" fill="url(#gIn)" stroke="#2c6cdc" stroke-width="1"/><rect x="0" y="0" width="16" height="3" fill="url(#gTitle)"/><path d="M11.6 4.6c-1.7-.5-2.7.2-3.1 2L7.2 12.2c-.3 1.3-1.2 1.9-2.9 1.5" fill="none" stroke="#0a1238" stroke-width="1.15" stroke-linecap="round"/><path d="M5.9 7.6h4.6" stroke="#0a1238" stroke-width="1.1" stroke-linecap="round"/></svg>
<span class="t" style="left:25.2px;top:296.8px;line-height:16px;font-size:12.4px;color:#5c5c5c;letter-spacing:-0.053px;">sub<span style="letter-spacing:-2.053px">_</span>5960</span>
<svg style="left:3px;top:317px" width="16" height="16" viewBox="0 0 16 16" ><rect x=".5" y=".5" width="15" height="15" fill="url(#gIn)" stroke="#2c6cdc" stroke-width="1"/><rect x="0" y="0" width="16" height="3" fill="url(#gTitle)"/><path d="M11.6 4.6c-1.7-.5-2.7.2-3.1 2L7.2 12.2c-.3 1.3-1.2 1.9-2.9 1.5" fill="none" stroke="#0a1238" stroke-width="1.15" stroke-linecap="round"/><path d="M5.9 7.6h4.6" stroke="#0a1238" stroke-width="1.1" stroke-linecap="round"/></svg>
<span class="t" style="left:25.2px;top:317.8px;line-height:16px;font-size:12.4px;color:#5c5c5c;letter-spacing:-0.053px;">sub<span style="letter-spacing:-2.053px">_</span>5970</span>
<svg style="left:3px;top:338px" width="16" height="16" viewBox="0 0 16 16" ><rect x=".5" y=".5" width="15" height="15" fill="url(#gIn)" stroke="#2c6cdc" stroke-width="1"/><rect x="0" y="0" width="16" height="3" fill="url(#gTitle)"/><path d="M11.6 4.6c-1.7-.5-2.7.2-3.1 2L7.2 12.2c-.3 1.3-1.2 1.9-2.9 1.5" fill="none" stroke="#0a1238" stroke-width="1.15" stroke-linecap="round"/><path d="M5.9 7.6h4.6" stroke="#0a1238" stroke-width="1.1" stroke-linecap="round"/></svg>
<span class="t" style="left:25.2px;top:338.8px;line-height:16px;font-size:12.4px;color:#5c5c5c;letter-spacing:-0.053px;">sub<span style="letter-spacing:-2.053px">_</span>5990</span>
<svg style="left:3px;top:359px" width="16" height="16" viewBox="0 0 16 16" ><rect x=".5" y=".5" width="15" height="15" fill="url(#gIn)" stroke="#2c6cdc" stroke-width="1"/><rect x="0" y="0" width="16" height="3" fill="url(#gTitle)"/><path d="M11.6 4.6c-1.7-.5-2.7.2-3.1 2L7.2 12.2c-.3 1.3-1.2 1.9-2.9 1.5" fill="none" stroke="#0a1238" stroke-width="1.15" stroke-linecap="round"/><path d="M5.9 7.6h4.6" stroke="#0a1238" stroke-width="1.1" stroke-linecap="round"/></svg>
<span class="t" style="left:25.2px;top:359.8px;line-height:16px;font-size:12.4px;color:#4a4a4a;font-weight:bold;">j<span style="letter-spacing:-1.997px">_</span>free</span>
<svg style="left:3px;top:380px" width="16" height="16" viewBox="0 0 16 16" ><rect x=".5" y=".5" width="15" height="15" fill="url(#gIn)" stroke="#2c6cdc" stroke-width="1"/><rect x="0" y="0" width="16" height="3" fill="url(#gTitle)"/><path d="M11.6 4.6c-1.7-.5-2.7.2-3.1 2L7.2 12.2c-.3 1.3-1.2 1.9-2.9 1.5" fill="none" stroke="#0a1238" stroke-width="1.15" stroke-linecap="round"/><path d="M5.9 7.6h4.6" stroke="#0a1238" stroke-width="1.1" stroke-linecap="round"/></svg>
<span class="t" style="left:25.2px;top:380.8px;line-height:16px;font-size:12.4px;color:#5c5c5c;letter-spacing:-0.275px;">sub<span style="letter-spacing:-2.276px">_</span>59C0</span>
<svg style="left:3px;top:401px" width="16" height="16" viewBox="0 0 16 16" ><rect x=".5" y=".5" width="15" height="15" fill="url(#gIn)" stroke="#2c6cdc" stroke-width="1"/><rect x="0" y="0" width="16" height="3" fill="url(#gTitle)"/><path d="M11.6 4.6c-1.7-.5-2.7.2-3.1 2L7.2 12.2c-.3 1.3-1.2 1.9-2.9 1.5" fill="none" stroke="#0a1238" stroke-width="1.15" stroke-linecap="round"/><path d="M5.9 7.6h4.6" stroke="#0a1238" stroke-width="1.1" stroke-linecap="round"/></svg>
<span class="t" style="left:25.2px;top:401.8px;line-height:16px;font-size:12.4px;color:#5c5c5c;letter-spacing:-0.275px;">sub<span style="letter-spacing:-2.276px">_</span>5C50</span>
<svg style="left:3px;top:422px" width="16" height="16" viewBox="0 0 16 16" ><rect x=".5" y=".5" width="15" height="15" fill="url(#gIn)" stroke="#2c6cdc" stroke-width="1"/><rect x="0" y="0" width="16" height="3" fill="url(#gTitle)"/><path d="M11.6 4.6c-1.7-.5-2.7.2-3.1 2L7.2 12.2c-.3 1.3-1.2 1.9-2.9 1.5" fill="none" stroke="#0a1238" stroke-width="1.15" stroke-linecap="round"/><path d="M5.9 7.6h4.6" stroke="#0a1238" stroke-width="1.1" stroke-linecap="round"/></svg>
<span class="t" style="left:25.2px;top:422.8px;line-height:16px;font-size:12.4px;color:#5c5c5c;letter-spacing:-0.401px;">sub<span style="letter-spacing:-2.401px">_</span>5CA0</span>
<div style="left:0px;top:441px;width:146.5px;height:21px;background:#8ca86a"></div>
<svg style="left:3px;top:443px" width="16" height="16" viewBox="0 0 16 16" ><rect x=".5" y=".5" width="15" height="15" fill="url(#gInS)" stroke="#5e86c4" stroke-width="1"/><rect x="0" y="0" width="16" height="3" fill="url(#gTitle)" opacity=".7"/><path d="M11.6 4.6c-1.7-.5-2.7.2-3.1 2L7.2 12.2c-.3 1.3-1.2 1.9-2.9 1.5" fill="none" stroke="#0a1238" stroke-width="1.15" stroke-linecap="round"/><path d="M5.9 7.6h4.6" stroke="#0a1238" stroke-width="1.1" stroke-linecap="round"/></svg>
<span class="t" style="left:25.2px;top:443.8px;line-height:16px;font-size:12.4px;color:#fff;letter-spacing:-0.061px;">sub<span style="letter-spacing:-2.061px">_</span>5D20</span>
<svg style="left:3px;top:464px" width="16" height="16" viewBox="0 0 16 16" ><rect x=".5" y=".5" width="15" height="15" fill="url(#gIn)" stroke="#2c6cdc" stroke-width="1"/><rect x="0" y="0" width="16" height="3" fill="url(#gTitle)"/><path d="M11.6 4.6c-1.7-.5-2.7.2-3.1 2L7.2 12.2c-.3 1.3-1.2 1.9-2.9 1.5" fill="none" stroke="#0a1238" stroke-width="1.15" stroke-linecap="round"/><path d="M5.9 7.6h4.6" stroke="#0a1238" stroke-width="1.1" stroke-linecap="round"/></svg>
<span class="t" style="left:25.2px;top:464.8px;line-height:16px;font-size:12.4px;color:#5c5c5c;letter-spacing:-0.249px;">sub<span style="letter-spacing:-2.249px">_</span>5E00</span>
</div>
<div style="left:150px;top:172px;width:14px;height:495px;background:#fafafa;border-left:1px solid #dedede"></div>
<div style="left:154px;top:294px;width:6px;height:30px;background:#b4b4b4;border-radius:3px"></div>
<div style="left:4px;top:667px;width:146.5px;height:13.5px;background:#f8f8f8;border-top:1px solid #e2e2e2"></div>
<div style="left:19px;top:671px;width:30px;height:6px;background:#bdbdbd;border-radius:3px"></div>
<div style="left:150.5px;top:667px;width:13.5px;height:13.5px;background:#ececec"></div>
<div style="left:4px;top:680.5px;width:160px;height:23.5px;background:#efefef"></div>
<span class="t" style="left:8.9px;top:684.5px;line-height:16px;font-size:12.4px;color:#555;letter-spacing:-0.078px;">Line 130 of 460</span>
<div class="dotv" style="left:164px;top:143px;width:4px;height:561px;"></div>
<div class="doth" style="left:3px;top:703px;width:1345px;height:4px;"></div>
<div class="dotv" style="left:875px;top:177px;width:4px;height:527px;"></div>
<div style="left:168px;top:175px;width:1180px;height:1px;background:#bababa"></div>
<div style="left:168px;top:176px;width:1180px;height:1px;background:#dcdcdc"></div>
<div style="left:168px;top:143px;width:169px;height:33px;background:#fff;border:1px solid #dcdcdc;border-bottom:none;border-radius:2px 2px 0 0"></div>
<span class="t" style="left:177.3px;top:152.1px;line-height:16px;font-size:12.4px;color:#555;letter-spacing:-0.044px;">IDA View-A, RefHunter</span>
<svg style="left:312px;top:153px" width="14" height="14" viewBox="0 0 14 14" ><rect x=".6" y=".6" width="12.8" height="12.8" rx="2.2" fill="#e3855c" stroke="#d9412d" stroke-width="1.2"/><path d="M3.9 3.9l6.2 6.2M10.1 3.9l-6.2 6.2" stroke="#fff" stroke-width="2.2"/></svg>
<svg style="left:344px;top:152px" width="16" height="17" viewBox="0 0 16 17" ><rect x=".5" y=".5" width="14" height="14" fill="url(#gIn)" stroke="#2c6cdc" stroke-width="1"/><rect x="0" y="0" width="15" height="3" fill="url(#gTitle)"/><path d="M7.5 4.2l3.9 2.2v4.4l-3.9 2.2-3.9-2.2V6.4z" fill="#dce8fc" stroke="#2a2aff" stroke-width="1.15" stroke-linejoin="round"/></svg>
<span class="t" style="left:387.6px;top:152.6px;line-height:16px;font-size:12.4px;color:#555;letter-spacing:-0.297px;">Hex View-1</span>
<svg style="left:480px;top:154px" width="14" height="14" viewBox="0 0 14 14" ><rect x=".6" y=".6" width="12.8" height="12.8" rx="2.2" fill="#c9c9c9" stroke="#a9a9a9" stroke-width="1.1"/><path d="M3.9 3.9l6.2 6.2M10.1 3.9l-6.2 6.2" stroke="#fff" stroke-width="2.2"/></svg>
<svg style="left:512px;top:152px" width="16" height="17" viewBox="0 0 16 17" ><rect x=".5" y=".5" width="14" height="14" fill="url(#gIn)" stroke="#2c6cdc" stroke-width="1"/><rect x="0" y="0" width="15" height="3" fill="url(#gTitle)"/><path d="M5.9 4.6h3.2v1.8H5.9zM6 6.4L4.3 12.6M9 6.4l1.7 6.2M5.4 8.6h4.2M9.3 8.8L4.6 12.2M6.2 9.4l3.6 2" fill="none" stroke="#0c2460" stroke-width="1" stroke-linecap="round"/></svg>
<span class="t" style="left:558px;top:152.6px;line-height:16px;font-size:12.4px;color:#555;letter-spacing:0.133px;">Structures</span>
<svg style="left:649px;top:154px" width="14" height="14" viewBox="0 0 14 14" ><rect x=".6" y=".6" width="12.8" height="12.8" rx="2.2" fill="#c9c9c9" stroke="#a9a9a9" stroke-width="1.1"/><path d="M3.9 3.9l6.2 6.2M10.1 3.9l-6.2 6.2" stroke="#fff" stroke-width="2.2"/></svg>
<svg style="left:681px;top:152px" width="16" height="17" viewBox="0 0 16 17" ><rect x=".5" y=".5" width="15" height="14" fill="url(#gIn)" stroke="#2c6cdc" stroke-width="1"/><rect x="0" y="0" width="16" height="3" fill="url(#gTitle)"/><path d="M5.5 3.1l1.5 1.5-1.5 1.5-1.5-1.5z" fill="#10e8f8" stroke="#0a1a90" stroke-width=".9"/><path d="M8.2 4.6h3" stroke="#1048d0" stroke-width="1.1"/><path d="M5.5 7.1l1.5 1.5-1.5 1.5-1.5-1.5z" fill="#10e8f8" stroke="#0a1a90" stroke-width=".9"/><path d="M8.2 8.6h3" stroke="#1048d0" stroke-width="1.1"/><path d="M5.5 11.1l1.5 1.5-1.5 1.5-1.5-1.5z" fill="#10e8f8" stroke="#0a1a90" stroke-width=".9"/><path d="M8.2 12.6h3" stroke="#1048d0" stroke-width="1.1"/></svg>
<span class="t" style="left:736.3px;top:152.6px;line-height:16px;font-size:12.4px;color:#555;letter-spacing:-0.148px;">Enums</span>
<svg style="left:817px;top:154px" width="14" height="14" viewBox="0 0 14 14" ><rect x=".6" y=".6" width="12.8" height="12.8" rx="2.2" fill="#c9c9c9" stroke="#a9a9a9" stroke-width="1.1"/><path d="M3.9 3.9l6.2 6.2M10.1 3.9l-6.2 6.2" stroke="#fff" stroke-width="2.2"/></svg>
<svg style="left:849px;top:152px" width="16" height="17" viewBox="0 0 16 17" ><rect x=".5" y=".5" width="14" height="14" fill="url(#gIn)" stroke="#2c6cdc" stroke-width="1"/><rect x="0" y="0" width="15" height="3" fill="url(#gTitle)"/><rect x="6.5" y="5.5" width="10" height="11" fill="url(#gDoc)" stroke="url(#gDocB)" stroke-width="1"/><path d="M9 7.5h4M9 9.5h4M9 11.5h4M9 13.5h4" stroke="#1414b4" stroke-width="1" shape-rendering="crispEdges"/><path d="M1.2 6.4h2.6v-2.2l3.9 3.5-3.9 3.5v-2.2h-2.6z" fill="#22d822" stroke="#064006" stroke-width=".9" stroke-linejoin="round"/><path d="M4.8 6.4l1.6 1.3-1.6 1.3z" fill="#b8ffd8"/></svg>
<span class="t" style="left:901.6px;top:152.6px;line-height:16px;font-size:12.4px;color:#555;letter-spacing:0.494px;">Imports</span>
<svg style="left:986px;top:154px" width="14" height="14" viewBox="0 0 14 14" ><rect x=".6" y=".6" width="12.8" height="12.8" rx="2.2" fill="#c9c9c9" stroke="#a9a9a9" stroke-width="1.1"/><path d="M3.9 3.9l6.2 6.2M10.1 3.9l-6.2 6.2" stroke="#fff" stroke-width="2.2"/></svg>
<svg style="left:1018px;top:152px" width="16" height="17" viewBox="0 0 16 17" ><g transform="translate(1,0)"><rect x=".5" y=".5" width="14" height="14" fill="url(#gIn)" stroke="#2c6cdc" stroke-width="1"/><rect x="0" y="0" width="15" height="3" fill="url(#gTitle)"/></g><rect x="0.5" y="5.5" width="10" height="11" fill="url(#gDoc)" stroke="url(#gDocB)" stroke-width="1"/><path d="M3 7.5h3M3 9.5h3M3 11.5h3M3 13.5h4" stroke="#1414b4" stroke-width="1" shape-rendering="crispEdges"/><path d="M7 6.4h2.6v-2.2l3.9 3.5-3.9 3.5v-2.2h-2.6z" fill="#22d822" stroke="#064006" stroke-width=".9" stroke-linejoin="round"/><path d="M10.6 6.4l1.6 1.3-1.6 1.3z" fill="#b8ffd8"/></svg>
<span class="t" style="left:1071.3px;top:152.6px;line-height:16px;font-size:12.4px;color:#555;letter-spacing:-0.039px;">Exports</span>
<svg style="left:1154px;top:154px" width="14" height="14" viewBox="0 0 14 14" ><rect x=".6" y=".6" width="12.8" height="12.8" rx="2.2" fill="#c9c9c9" stroke="#a9a9a9" stroke-width="1.1"/><path d="M3.9 3.9l6.2 6.2M10.1 3.9l-6.2 6.2" stroke="#fff" stroke-width="2.2"/></svg>
<div style="left:168px;top:176px;width:707px;height:25px;border:1px solid #c9c9c9;background:#efefef"></div>
<svg style="left:171.3px;top:181px" width="16" height="17" viewBox="0 0 16 17" ><rect x=".5" y=".5" width="13" height="13" fill="url(#gIn)" stroke="#2c6cdc" stroke-width="1"/><rect x="0" y="0" width="14" height="3" fill="url(#gTitle)"/><rect x="5.5" y="3.5" width="10" height="12" fill="url(#gDoc)" stroke="url(#gDocB)" stroke-width="1"/><path d="M7 5.5h4M9 7.5h5M9 9.5h5M7 11.5h4M9 13.5h5" stroke="#4a5668" stroke-width="1" shape-rendering="crispEdges"/></svg>
<span class="t" style="left:192.5px;top:181.6px;line-height:16px;font-size:12.4px;color:#555;letter-spacing:-0.187px;">IDA View-A</span>
<svg style="left:805px;top:186px" width="9" height="9" viewBox="0 0 9 9" ><rect x=".5" y=".5" width="8" height="8" fill="#f6f6f6" stroke="#000" stroke-width="1"/><rect x="0" y="0" width="9" height="2" fill="#000"/></svg>
<svg style="left:830px;top:185px" width="11" height="11" viewBox="0 0 11 11" ><rect x=".5" y=".5" width="10" height="10" rx="2" fill="#f1f1f1" stroke="#6e6b68" stroke-width="1"/><rect x="4.5" y="2.5" width="4" height="4" rx=".8" fill="none" stroke="#6e6b68" stroke-width="1"/><rect x="2.5" y="4.5" width="4" height="4" rx=".8" fill="#f1f1f1" stroke="#6e6b68" stroke-width="1"/></svg>
<svg style="left:856px;top:185px" width="11" height="11" viewBox="0 0 11 11" ><rect x=".5" y=".5" width="10" height="10" rx="2" fill="#f1f1f1" stroke="#6e6b68" stroke-width="1"/><path d="M2.9 2.9l5.2 5.2M8.1 2.9L2.9 8.1" stroke="#55534f" stroke-width="1.8"/></svg>
<style>.cn{color:#000080}.cb{color:#0000ff}.cg{color:#0b870b}.cy{color:#808080;font-weight:normal;-webkit-text-stroke:.3px #808080}.ck{color:#000}.cd{color:#555}.cx{color:#0b870b}.co{color:#ff8000}</style>
<div style="left:168px;top:204px;width:75px;height:499px;background:#fff"></div>
<svg style="left:168px;top:204px" width="75" height="499" viewBox="0 0 75 499"><path d="M5.5 2L5.5 438" stroke="#b9b9b9" stroke-width="1" fill="none" stroke-dasharray="5 5.1"/><path d="M5.5 438L57.5 438" stroke="#b9b9b9" stroke-width="1" fill="none" stroke-dasharray="5 5.1"/><path d="M57.4 433.8 L61.9 438 L57.4 442.2 z" fill="#b8b8b8"/><path d="M37.5 6L37.5 374.5" stroke="#c0c0c0" stroke-width="3" fill="none"/><path d="M36 374.5L71 374.5" stroke="#c0c0c0" stroke-width="3" fill="none"/><path d="M32.8 7.8 L42.2 7.8 L37.5 2.8 z" fill="#c0c0c0"/><path d="M53.5 13L53.5 319" stroke="#c0c0c0" stroke-width="3" fill="none" stroke-dasharray="4.8 5.3"/><path d="M53.5 317.7L68 317.7" stroke="#c0c0c0" stroke-width="3" fill="none" stroke-dasharray="4.8 5.3"/><path d="M48.8 7.8 L58.2 7.8 L53.5 2.8 z" fill="#c0c0c0"/><rect x="35.8" y="93" width="3.4" height="3" fill="#fff"/><rect x="51.8" y="93" width="3.4" height="3" fill="#fff"/><rect x="35.8" y="218.5" width="3.4" height="3" fill="#fff"/><rect x="51.8" y="218.5" width="3.4" height="3" fill="#fff"/><path d="M21.5 94.5L21.5 491" stroke="#b9b9b9" stroke-width="1" fill="none" stroke-dasharray="5 5.1"/><path d="M21.5 94.5L66 94.5" stroke="#b9b9b9" stroke-width="1" fill="none" stroke-dasharray="5 5.1"/><path d="M21.5 220L67 220" stroke="#b9b9b9" stroke-width="1" fill="none" stroke-dasharray="5 5.1"/><path d="M17.3 491 L25.7 491 L21.5 496.2 z" fill="#b8b8b8"/><path d="M53.5 346.5L53.5 491" stroke="#b9b9b9" stroke-width="1" fill="none" stroke-dasharray="5 5.1"/><path d="M53.5 346.5L68 346.5" stroke="#b9b9b9" stroke-width="1" fill="none" stroke-dasharray="5 5.1"/><path d="M49.3 491 L57.7 491 L53.5 496.2 z" fill="#b8b8b8"/><path d="M0 472.5L71 472.5" stroke="#c0c0c0" stroke-width="3" fill="none"/><circle cx="67" cy="4" r="3.1" fill="#5fcfff"/><circle cx="67" cy="18" r="3.1" fill="#5fcfff"/><circle cx="67" cy="32" r="3.1" fill="#5fcfff"/><circle cx="67" cy="46" r="3.1" fill="#5fcfff"/><circle cx="67" cy="60" r="3.1" fill="#5fcfff"/><circle cx="67" cy="74" r="3.1" fill="#5fcfff"/><circle cx="67" cy="88" r="3.1" fill="#5fcfff"/><circle cx="67" cy="102" r="3.1" fill="#5fcfff"/><circle cx="67" cy="116" r="3.1" fill="#5fcfff"/><circle cx="67" cy="130" r="3.1" fill="#5fcfff"/><circle cx="67" cy="144" r="3.1" fill="#5fcfff"/><circle cx="67" cy="158" r="3.1" fill="#5fcfff"/><circle cx="67" cy="172" r="3.1" fill="#5fcfff"/><circle cx="67" cy="186" r="3.1" fill="#5fcfff"/><circle cx="67" cy="200" r="3.1" fill="#5fcfff"/><circle cx="67" cy="214" r="3.1" fill="#5fcfff"/><circle cx="67" cy="228" r="3.1" fill="#5fcfff"/><circle cx="67" cy="242" r="3.1" fill="#5fcfff"/><circle cx="67" cy="256" r="3.1" fill="#5fcfff"/><circle cx="67" cy="270" r="3.1" fill="#5fcfff"/><circle cx="67" cy="284" r="3.1" fill="#5fcfff"/><circle cx="67" cy="298" r="3.1" fill="#5fcfff"/><circle cx="67" cy="312" r="3.1" fill="#5fcfff"/><circle cx="67" cy="326" r="3.1" fill="#5fcfff"/><circle cx="67" cy="340" r="3.1" fill="#5fcfff"/><circle cx="67" cy="354" r="3.1" fill="#5fcfff"/><circle cx="67" cy="368" r="3.1" fill="#5fcfff"/><circle cx="67" cy="396" r="3.1" fill="#5fcfff"/><circle cx="67" cy="438" r="3.1" fill="#5fcfff"/><circle cx="67" cy="452" r="3.1" fill="#5fcfff"/><circle cx="67" cy="466" r="3.1" fill="#5fcfff"/></svg>
<div class="dotv" style="left:243px;top:204px;width:4px;height:499px;"></div>
<div style="left:247px;top:204px;width:627.5px;height:499px;background:#fff;border-top:1.5px solid #9c9c9c;border-left:1px solid #8f8f8f"></div>
<div style="left:248px;top:261px;width:613px;height:14px;background:#4fa7c9"></div>
<div style="left:248px;top:205px;width:613px;height:467px;overflow:hidden"><pre style="left:15.5px;top:0.95px;height:15.3846px;font-size:13px;line-height:15.3846px;transform:scaleY(0.91);transform-origin:0 0;color:#000"><b class="ck">.text:0000000000005DE0</b>                 <b class="cn">call</b>    <b class="cb">_nl_langinfo</b></pre><pre style="left:15.5px;top:14.95px;height:15.3846px;font-size:13px;line-height:15.3846px;transform:scaleY(0.91);transform-origin:0 0;color:#000"><b class="ck">.text:0000000000005DE5</b>                 <b class="cn">mov</b>     <b class="cn">esi, </b><b class="cg">25h</b><i class="cy"> ; '%'</i>  <b class="cb">; c</b></pre><pre style="left:15.5px;top:28.95px;height:15.3846px;font-size:13px;line-height:15.3846px;transform:scaleY(0.91);transform-origin:0 0;color:#000"><b class="ck">.text:0000000000005DEA</b>                 <b class="cn">mov</b>     <b class="cn">rdi, rax</b>        <b class="cb">; s</b></pre><pre style="left:15.5px;top:42.95px;height:15.3846px;font-size:13px;line-height:15.3846px;transform:scaleY(0.91);transform-origin:0 0;color:#000"><b class="ck">.text:0000000000005DED</b>                 <b class="cn">mov</b>     <b class="cn">r15, rax</b></pre><pre style="left:15.5px;top:56.95px;height:15.3846px;font-size:13px;line-height:15.3846px;transform:scaleY(0.91);transform-origin:0 0;color:#000"><b class="cb">.text:0000000000005DF0</b>                 <b class="cn">call</b>    <b class="cb">_strchr</b></pre><pre style="left:15.5px;top:70.95px;height:15.3846px;font-size:13px;line-height:15.3846px;transform:scaleY(0.91);transform-origin:0 0;color:#000"><b class="ck">.text:0000000000005DF5</b>                 <b class="cn">test</b>    <b class="cn">rax, rax</b></pre><pre style="left:15.5px;top:84.95px;height:15.3846px;font-size:13px;line-height:15.3846px;transform:scaleY(0.91);transform-origin:0 0;color:#000"><b class="ck">.text:0000000000005DF8</b>                 <b class="cn">jnz</b>     <b class="cn">short loc_5E68</b></pre><pre style="left:15.5px;top:98.95px;height:15.3846px;font-size:13px;line-height:15.3846px;transform:scaleY(0.91);transform-origin:0 0;color:#000"><b class="ck">.text:0000000000005DFA</b>                 <b class="cn">mov</b>     <b class="cn">rcx, [rsp+</b><b class="cg">688h+var_688</b><b class="cn">]</b></pre><pre style="left:15.5px;top:112.95px;height:15.3846px;font-size:13px;line-height:15.3846px;transform:scaleY(0.91);transform-origin:0 0;color:#000"><b class="ck">.text:0000000000005DFE</b>                 <b class="cn">xor</b>     <b class="cn">r9d, r9d</b></pre><pre style="left:15.5px;top:126.95px;height:15.3846px;font-size:13px;line-height:15.3846px;transform:scaleY(0.91);transform-origin:0 0;color:#000"><b class="ck">.text:0000000000005E01</b>                 <b class="cn">xor</b>     <b class="cn">r8d, r8d</b></pre><pre style="left:15.5px;top:140.95px;height:15.3846px;font-size:13px;line-height:15.3846px;transform:scaleY(0.91);transform-origin:0 0;color:#000"><b class="ck">.text:0000000000005E04</b>                 <b class="cn">mov</b>     <b class="cn">edx, </b><b class="cg">80h</b></pre><pre style="left:15.5px;top:154.95px;height:15.3846px;font-size:13px;line-height:15.3846px;transform:scaleY(0.91);transform-origin:0 0;color:#000"><b class="ck">.text:0000000000005E09</b>                 <b class="cn">mov</b>     <b class="cn">rsi, rbx</b>        <b class="cb">; dest</b></pre><pre style="left:15.5px;top:168.95px;height:15.3846px;font-size:13px;line-height:15.3846px;transform:scaleY(0.91);transform-origin:0 0;color:#000"><b class="ck">.text:0000000000005E0C</b>                 <b class="cn">mov</b>     <b class="cn">rdi, r15</b>        <b class="cb">; s</b></pre><pre style="left:15.5px;top:182.95px;height:15.3846px;font-size:13px;line-height:15.3846px;transform:scaleY(0.91);transform-origin:0 0;color:#000"><b class="ck">.text:0000000000005E0F</b>                 <b class="cn">call</b>    <b class="cn">sub_FD40</b></pre><pre style="left:15.5px;top:196.95px;height:15.3846px;font-size:13px;line-height:15.3846px;transform:scaleY(0.91);transform-origin:0 0;color:#000"><b class="ck">.text:0000000000005E14</b>                 <b class="cn">cmp</b>     <b class="cn">rax, </b><b class="cg">7Fh</b></pre><pre style="left:15.5px;top:210.95px;height:15.3846px;font-size:13px;line-height:15.3846px;transform:scaleY(0.91);transform-origin:0 0;color:#000"><b class="ck">.text:0000000000005E18</b>                 <b class="cn">ja</b>      <b class="cn">short loc_5E68</b></pre><pre style="left:15.5px;top:224.95px;height:15.3846px;font-size:13px;line-height:15.3846px;transform:scaleY(0.91);transform-origin:0 0;color:#000"><b class="ck">.text:0000000000005E1A</b>                 <b class="cn">mov</b>     <b class="cn">rax, [rsp+</b><b class="cg">688h+var_660</b><b class="cn">]</b></pre><pre style="left:15.5px;top:238.95px;height:15.3846px;font-size:13px;line-height:15.3846px;transform:scaleY(0.91);transform-origin:0 0;color:#000"><b class="ck">.text:0000000000005E1F</b>                 <b class="cn">cmp</b>     <b class="cn">rbp, rax</b></pre><pre style="left:15.5px;top:252.95px;height:15.3846px;font-size:13px;line-height:15.3846px;transform:scaleY(0.91);transform-origin:0 0;color:#000"><b class="ck">.text:0000000000005E22</b>                 <b class="cn">cmovb</b>   <b class="cn">rbp, rax</b></pre><pre style="left:15.5px;top:266.95px;height:15.3846px;font-size:13px;line-height:15.3846px;transform:scaleY(0.91);transform-origin:0 0;color:#000"><b class="ck">.text:0000000000005E26</b>                 <b class="cn">sub</b>     <b class="cn">rbx, </b><b class="cg">0FFFFFFFFFFFFFF80h</b></pre><pre style="left:15.5px;top:280.95px;height:15.3846px;font-size:13px;line-height:15.3846px;transform:scaleY(0.91);transform-origin:0 0;color:#000"><b class="ck">.text:0000000000005E2A</b>                 <b class="cn">add</b>     <b class="cn">r12d, </b><b class="cg">1</b></pre><pre style="left:15.5px;top:294.95px;height:15.3846px;font-size:13px;line-height:15.3846px;transform:scaleY(0.91);transform-origin:0 0;color:#000"><b class="ck">.text:0000000000005E2E</b>                 <b class="cn">cmp</b>     <b class="cn">rbx, r14</b></pre><pre style="left:15.5px;top:308.95px;height:15.3846px;font-size:13px;line-height:15.3846px;transform:scaleY(0.91);transform-origin:0 0;color:#000"><b class="ck">.text:0000000000005E31</b>                 <b class="cn">jnz</b>     <b class="cn">short loc_5DD8</b></pre><pre style="left:15.5px;top:322.95px;height:15.3846px;font-size:13px;line-height:15.3846px;transform:scaleY(0.91);transform-origin:0 0;color:#000"><b class="ck">.text:0000000000005E33</b>                 <b class="cn">cmp</b>     <b class="cn">r13, rbp</b></pre><pre style="left:15.5px;top:336.95px;height:15.3846px;font-size:13px;line-height:15.3846px;transform:scaleY(0.91);transform-origin:0 0;color:#000"><b class="ck">.text:0000000000005E36</b>                 <b class="cn">jbe</b>     <b class="cn">short loc_5E9F</b></pre><pre style="left:15.5px;top:350.95px;height:15.3846px;font-size:13px;line-height:15.3846px;transform:scaleY(0.91);transform-origin:0 0;color:#000"><b class="ck">.text:0000000000005E38</b>                 <b class="cn">mov</b>     <b class="cn">r13, rbp</b></pre><pre style="left:15.5px;top:364.95px;height:15.3846px;font-size:13px;line-height:15.3846px;transform:scaleY(0.91);transform-origin:0 0;color:#000"><b class="ck">.text:0000000000005E3B</b>                 <b class="cn">jmp</b>     <b class="cn">short loc_5DC1</b></pre><pre style="left:15.5px;top:378.95px;height:15.3846px;font-size:13px;line-height:15.3846px;transform:scaleY(0.91);transform-origin:0 0;color:#000"><b class="ck">.text:0000000000005E3B</b> <i class="cy">;</i></pre><pre style="left:15.5px;top:392.95px;height:15.3846px;font-size:13px;line-height:15.3846px;transform:scaleY(0.91);transform-origin:0 0;color:#000"><i class="cy">.text:0000000000005E3D</i>                 <b class="cn">align </b><b class="cg">20h</b></pre><pre style="left:15.5px;top:406.95px;height:15.3846px;font-size:13px;line-height:15.3846px;transform:scaleY(0.91);transform-origin:0 0;color:#000"><b class="ck">.text:0000000000005E40</b></pre><pre style="left:15.5px;top:420.95px;height:15.3846px;font-size:13px;line-height:15.3846px;transform:scaleY(0.91);transform-origin:0 0;color:#000"><b class="ck">.text:0000000000005E40</b> <b class="cn">loc_5E40:</b>                               <b class="cx">; CODE XREF: sub_5D20+134</b></pre><pre style="left:15.5px;top:434.95px;height:15.3846px;font-size:13px;line-height:15.3846px;transform:scaleY(0.91);transform-origin:0 0;color:#000"><b class="ck">.text:0000000000005E40</b>                 <b class="cn">movzx</b>   <b class="cn">edx, byte ptr [rax+</b><b class="cg">2</b><b class="cn">]</b></pre><pre style="left:15.5px;top:448.95px;height:15.3846px;font-size:13px;line-height:15.3846px;transform:scaleY(0.91);transform-origin:0 0;color:#000"><b class="ck">.text:0000000000005E44</b>                 <b class="cn">add</b>     <b class="cn">rax, </b><b class="cg">1</b></pre><pre style="left:15.5px;top:462.95px;height:15.3846px;font-size:13px;line-height:15.3846px;transform:scaleY(0.91);transform-origin:0 0;color:#000"><b class="ck">.text:0000000000005E48</b>                 <b class="cn">cmp</b>     <b class="cn">dl, </b><b class="cg">25h</b></pre></div>
<svg style="left:248px;top:583px" width="613.5" height="14" viewBox="0 0 613.5 14"><path d="M209.90 7.4h6.3M217.70 7.4h6.3M225.50 7.4h6.3M233.30 7.4h6.3M241.10 7.4h6.3M248.90 7.4h6.3M256.70 7.4h6.3M264.50 7.4h6.3M272.30 7.4h6.3M280.10 7.4h6.3M287.90 7.4h6.3M295.70 7.4h6.3M303.50 7.4h6.3M311.30 7.4h6.3M319.10 7.4h6.3M326.90 7.4h6.3M334.70 7.4h6.3M342.50 7.4h6.3M350.30 7.4h6.3M358.10 7.4h6.3M365.90 7.4h6.3M373.70 7.4h6.3M381.50 7.4h6.3M389.30 7.4h6.3M397.10 7.4h6.3M404.90 7.4h6.3M412.70 7.4h6.3M420.50 7.4h6.3M428.30 7.4h6.3M436.10 7.4h6.3M443.90 7.4h6.3M451.70 7.4h6.3M459.50 7.4h6.3M467.30 7.4h6.3M475.10 7.4h6.3M482.90 7.4h6.3M490.70 7.4h6.3M498.50 7.4h6.3M506.30 7.4h6.3M514.10 7.4h6.3M521.90 7.4h6.3M529.70 7.4h6.3M537.50 7.4h6.3M545.30 7.4h6.3M553.10 7.4h6.3M560.90 7.4h6.3M568.70 7.4h6.3M576.50 7.4h6.3M584.30 7.4h6.3M592.10 7.4h6.3M599.90 7.4h6.3M607.70 7.4h6.3M615.50 7.4h6.3" fill="none" stroke="#808080" stroke-width="1.25"/></svg>
<div style="left:248px;top:672px;width:613px;height:17px;background:#efefef"></div>
<div class="sb" style="left:248px;top:673px;width:61px;height:14px;"><span style="bottom:-1.3px">00005DF0</span></div>
<div class="sb" style="left:312px;top:673px;width:212px;height:14px;"><span style="bottom:-1.3px">0000000000005DF0: sub_5D20+D0</span></div>
<div class="sb" style="left:528px;top:673px;width:218px;height:14px;"><span style="bottom:-1.3px">(Synchronized with Hex View-1)</span></div>
<div style="left:861px;top:205px;width:14px;height:484px;background:#fcfcfc;border-left:1px solid #dedede"></div>
<div style="left:865px;top:295px;width:6px;height:30px;background:#b4b4b4;border-radius:3px"></div>
<div style="left:248px;top:689px;width:613px;height:14px;background:#fafafa;border-top:1px solid #e6e6e6"></div>
<div style="left:263px;top:693px;width:445px;height:6px;background:#b4b4b4;border-radius:3px"></div>
<div style="left:861px;top:689px;width:14px;height:14px;background:#ececec"></div>
<div style="left:879px;top:176px;width:469px;height:25px;border:1px solid #c9c9c9;background:#fff"></div>
<svg style="left:882.3px;top:181px" width="16" height="17" viewBox="0 0 16 17" ><rect x=".5" y=".5" width="13" height="13" fill="url(#gIn)" stroke="#2c6cdc" stroke-width="1"/><rect x="0" y="0" width="14" height="3" fill="url(#gTitle)"/><rect x="5.5" y="3.5" width="10" height="12" fill="url(#gDoc)" stroke="url(#gDocB)" stroke-width="1"/><path d="M7 5.5h4M9 7.5h5M9 9.5h5M7 11.5h4M9 13.5h5" stroke="#4a5668" stroke-width="1" shape-rendering="crispEdges"/></svg>
<span class="t" style="left:903.8px;top:181.6px;line-height:16px;font-size:12.4px;color:#555;letter-spacing:0.124px;">RefHunter</span>
<svg style="left:1278px;top:186px" width="9" height="9" viewBox="0 0 9 9" ><rect x=".5" y=".5" width="8" height="8" fill="#f6f6f6" stroke="#000" stroke-width="1"/><rect x="0" y="0" width="9" height="2" fill="#000"/></svg>
<svg style="left:1303px;top:185px" width="11" height="11" viewBox="0 0 11 11" ><rect x=".5" y=".5" width="10" height="10" rx="2" fill="#f1f1f1" stroke="#6e6b68" stroke-width="1"/><rect x="4.5" y="2.5" width="4" height="4" rx=".8" fill="none" stroke="#6e6b68" stroke-width="1"/><rect x="2.5" y="4.5" width="4" height="4" rx=".8" fill="#f1f1f1" stroke="#6e6b68" stroke-width="1"/></svg>
<svg style="left:1329px;top:185px" width="11" height="11" viewBox="0 0 11 11" ><rect x=".5" y=".5" width="10" height="10" rx="2" fill="#f1f1f1" stroke="#6e6b68" stroke-width="1"/><path d="M2.9 2.9l5.2 5.2M8.1 2.9L2.9 8.1" stroke="#55534f" stroke-width="1.8"/></svg>
<div style="left:879px;top:204px;width:469px;height:499px;background:#fff;border-top:1.5px solid #9c9c9c;border-left:1px solid #8f8f8f"></div>
<div style="left:880px;top:429px;width:468px;height:14px;background:#e4e4e4"></div>
<div style="left:880px;top:205px;width:468px;height:478px;overflow:hidden"><pre style="left:0.3px;top:70.95px;height:15.3846px;font-size:13px;line-height:15.3846px;transform:scaleY(0.91);transform-origin:0 0;color:#000"><b class="cy"> Ctrl + &lt;H&gt;   Open</b></pre><pre style="left:0.3px;top:84.95px;height:15.3846px;font-size:13px;line-height:15.3846px;transform:scaleY(0.91);transform-origin:0 0;color:#000"><b class="cy"> ESC          Close</b></pre><pre style="left:0.3px;top:98.95px;height:15.3846px;font-size:13px;line-height:15.3846px;transform:scaleY(0.91);transform-origin:0 0;color:#000"><b class="cy"> &lt;C&gt;          [C]olor assembly line</b></pre><pre style="left:0.3px;top:112.95px;height:15.3846px;font-size:13px;line-height:15.3846px;transform:scaleY(0.91);transform-origin:0 0;color:#000"><b class="cy"> &lt;R&gt;          [R]efresh view</b></pre><pre style="left:0.3px;top:154.95px;height:15.3846px;font-size:13px;line-height:15.3846px;transform:scaleY(0.91);transform-origin:0 0;color:#000"><b class="cb">     From    |     To     |    Detail</b></pre><pre style="left:0.3px;top:182.95px;height:15.3846px;font-size:13px;line-height:15.3846px;transform:scaleY(0.91);transform-origin:0 0;color:#000"><b class="cb"> [CODE]</b></pre><pre style="left:0.3px;top:210.95px;height:15.3846px;font-size:13px;line-height:15.3846px;transform:scaleY(0.91);transform-origin:0 0;color:#000">  <b class="ck">0x5de0     </b><b class="cb">|</b> <b class="co">0x3c20     </b><b class="cb">|</b> <b class="cy">.nl_langinfo</b></pre><pre style="left:0.3px;top:224.95px;height:15.3846px;font-size:13px;line-height:15.3846px;transform:scaleY(0.91);transform-origin:0 0;color:#000"><b class="cb">*</b> <b class="cb">0x5df0     </b><b class="cb">|</b> <b class="co">0x39a0     </b><b class="cb">|</b> <b class="cy">.strchr</b></pre><pre style="left:0.3px;top:238.95px;height:15.3846px;font-size:13px;line-height:15.3846px;transform:scaleY(0.91);transform-origin:0 0;color:#000">  <b class="ck">0x5e0f     </b><b class="cb">|</b> <b class="co">0xfd40     </b><b class="cb">|</b> <b class="cy">sub_FD40</b></pre><pre style="left:0.3px;top:252.95px;height:15.3846px;font-size:13px;line-height:15.3846px;transform:scaleY(0.91);transform-origin:0 0;color:#000">  <b class="ck">0x5f29     </b><b class="cb">|</b> <b class="co">0x37c0     </b><b class="cb">|</b> <b class="cy">.__snprintf_chk</b></pre><pre style="left:0.3px;top:266.95px;height:15.3846px;font-size:13px;line-height:15.3846px;transform:scaleY(0.91);transform-origin:0 0;color:#000">  <b class="ck">0x5f65     </b><b class="cb">|</b> <b class="co">0x39c0     </b><b class="cb">|</b> <b class="cy">.snprintf</b></pre><pre style="left:0.3px;top:280.95px;height:15.3846px;font-size:13px;line-height:15.3846px;transform:scaleY(0.91);transform-origin:0 0;color:#000">  <b class="ck">0x5f6c     </b><b class="cb">|</b> <b class="co">0x3970     </b><b class="cb">|</b> <b class="cy">.__stack_chk_fail</b></pre><pre style="left:0.3px;top:308.95px;height:15.3846px;font-size:13px;line-height:15.3846px;transform:scaleY(0.91);transform-origin:0 0;color:#000"><b class="cb"> [DATA]</b></pre><pre style="left:0.3px;top:336.95px;height:15.3846px;font-size:13px;line-height:15.3846px;transform:scaleY(0.91);transform-origin:0 0;color:#000">  <b class="ck">0x5d50     </b><b class="cb">|</b> <b class="co">0x220040   </b><b class="cb">|</b> <b class="cy">0x26810100 (Unknown)</b></pre><pre style="left:0.3px;top:350.95px;height:15.3846px;font-size:13px;line-height:15.3846px;transform:scaleY(0.91);transform-origin:0 0;color:#000">  <b class="ck">0x5e5b     </b><b class="cb">|</b> <b class="co">0x2203c8   </b><b class="cb">|</b> <b class="cy">0xffffffff (Unknown)</b></pre><pre style="left:0.3px;top:364.95px;height:15.3846px;font-size:13px;line-height:15.3846px;transform:scaleY(0.91);transform-origin:0 0;color:#000">  <b class="ck">0x5ea7     </b><b class="cb">|</b> <b class="co">0x220040   </b><b class="cb">|</b> <b class="cy">0x26810100 (Unknown)</b></pre><pre style="left:0.3px;top:378.95px;height:15.3846px;font-size:13px;line-height:15.3846px;transform:scaleY(0.91);transform-origin:0 0;color:#000">  <b class="ck">0x5ecb     </b><b class="cb">|</b> <b class="co">0x2203e0   </b><b class="cb">|</b> <b class="cy">0xffffffff (Unknown)</b></pre><pre style="left:0.3px;top:392.95px;height:15.3846px;font-size:13px;line-height:15.3846px;transform:scaleY(0.91);transform-origin:0 0;color:#000">  <b class="ck">0x5f51     </b><b class="cb">|</b> <b class="co">0x1a2fc    </b><b class="cb">|</b> <b class="cy">0x25730077 (Unknown)</b></pre><pre style="left:0.3px;top:420.95px;height:15.3846px;font-size:13px;line-height:15.3846px;transform:scaleY(0.91);transform-origin:0 0;color:#000"><b class="cb"> [STRING DATA]</b></pre><pre style="left:0.3px;top:448.95px;height:15.3846px;font-size:13px;line-height:15.3846px;transform:scaleY(0.91);transform-origin:0 0;color:#000">  <b class="ck">0x5f05     </b><b class="cb">|</b> <b class="co">0x17bf0    </b><b class="cb">|</b> <b class="cy">"%.*s%s%s"</b></pre></div>
<svg style="left:880px;top:205px" width="340" height="58" viewBox="0 0 340 58"><path d="M23.20 12.50h7.9M31.00 12.50h7.9M38.80 12.50h7.9M93.40 12.50h7.9M101.20 12.50h7.9M109.00 12.50h7.9M116.80 12.50h7.9M124.60 12.50h7.9M140.20 12.50h7.9M148.00 12.50h7.9M233.80 12.50h7.9M241.60 12.50h7.9M17.00 26.60L21.90 16.50M31.00 26.50h7.9M48.30 16.50L53.20 26.60M54.40 26.50h7.9M62.20 26.50h7.9M70.00 26.50h7.9M87.20 26.60L92.10 16.50M101.20 26.50h7.9M110.60 26.60L115.50 16.50M126.20 26.60L131.10 16.50M134.00 26.60L138.90 16.50M149.60 26.60L154.50 16.50M155.80 26.50h7.9M171.40 26.50h7.9M179.20 26.50h7.9M187.00 26.50h7.9M194.80 26.50h7.9M202.60 26.50h7.9M227.60 26.60L232.50 16.50M243.20 26.60L248.10 16.50M249.40 26.50h7.9M257.20 26.50h7.9M265.00 26.50h7.9M272.80 26.50h7.9M288.40 26.50h7.9M296.20 26.50h7.9M304.00 26.50h7.9M311.80 26.50h7.9M9.20 40.60L14.10 30.50M27.30 37.60L25.40 41.10M38.80 40.50h7.9M48.20 40.60L53.10 30.50M63.10 35.40h6.2M70.00 40.50h7.9M79.70 31.10Q84.80 36.10 79.70 41.20M93.40 40.50h7.9M102.80 40.60L107.70 30.50M116.80 40.50h7.9M141.80 40.60L146.70 30.50M157.40 40.60L162.30 30.50M165.20 40.60L170.10 30.50M180.80 40.60L185.70 30.50M194.80 40.50h7.9M212.10 30.50L217.00 40.60M219.80 40.60L224.70 30.50M233.80 40.50h7.9M241.60 40.50h7.9M251.00 40.60L255.90 30.50M265.90 35.40h6.2M272.80 40.50h7.9M282.50 31.10Q287.60 36.10 282.50 41.20M296.20 40.50h7.9M304.00 40.50h7.9M313.40 40.60L318.30 30.50M1.40 54.60L6.30 44.50M7.60 54.50h7.9M17.00 54.60L21.90 44.50M27.20 44.90V54.80M31.00 54.50h7.9M42.80 44.90V54.80M48.30 44.50L53.20 54.60M54.40 54.50h7.9M62.20 54.50h7.9M71.60 54.60L76.50 44.50M77.80 54.50h7.9M87.20 54.60L92.10 44.50M95.00 54.60L99.90 44.50M101.20 54.50h7.9M110.60 54.60L115.50 44.50M118.40 54.60L123.30 44.50M124.60 54.50h7.9M134.00 54.60L138.90 44.50M141.90 44.50L146.80 54.60M148.00 54.50h7.9M159.90 51.60L158.00 55.10M163.60 54.50h7.9M173.00 54.60L177.90 44.50M179.20 54.50h7.9M188.60 54.60L193.50 44.50M196.40 54.60L201.30 44.50M202.60 54.50h7.9M212.00 54.60L216.90 44.50M219.90 44.50L224.80 54.60M226.00 54.50h7.9M233.80 54.50h7.9M243.20 54.60L248.10 44.50M251.10 44.50L256.00 54.60M257.20 54.50h7.9M265.00 54.50h7.9M274.40 54.60L279.30 44.50M280.60 54.50h7.9M290.00 54.60L294.90 44.50" fill="none" stroke="#0000ff" stroke-width="1.35" stroke-linecap="round"/></svg>
<svg style="left:880px;top:331px" width="340" height="14" viewBox="0 0 340 14"><path d="M0.60 7.4h6.3M8.40 7.4h6.3M16.20 7.4h6.3M24.00 7.4h6.3M31.80 7.4h6.3M39.60 7.4h6.3M47.40 7.4h6.3M55.20 7.4h6.3M63.00 7.4h6.3M70.80 7.4h6.3M78.60 7.4h6.3M86.40 7.4h6.3M94.20 7.4h6.3M102.00 7.4h6.3M109.80 7.4h6.3M117.60 7.4h6.3M125.40 7.4h6.3M133.20 7.4h6.3M141.00 7.4h6.3M148.80 7.4h6.3M156.60 7.4h6.3M164.40 7.4h6.3M172.20 7.4h6.3M180.00 7.4h6.3M187.80 7.4h6.3M195.60 7.4h6.3M203.40 7.4h6.3M211.20 7.4h6.3M219.00 7.4h6.3M226.80 7.4h6.3M234.60 7.4h6.3M242.40 7.4h6.3M250.20 7.4h6.3M258.00 7.4h6.3M265.80 7.4h6.3M273.60 7.4h6.3M281.40 7.4h6.3M289.20 7.4h6.3M297.00 7.4h6.3M304.80 7.4h6.3M312.60 7.4h6.3" fill="none" stroke="#0000ff" stroke-width="1.4"/></svg>
<div style="left:1261px;top:430px;width:2px;height:12px;background:#000"></div>
<div style="left:880px;top:683.5px;width:468px;height:19.5px;background:#efefef"></div>
<div class="sb" style="left:879px;top:686px;width:11px;height:15px;"></div>
<div class="sb" style="left:893px;top:686px;width:18px;height:15px;"><span style="bottom:-0.3px">16</span></div>
<div class="sb" style="left:914px;top:686px;width:10px;height:15px;"></div>
<svg style="left:1299px;top:530px" width="15" height="23" viewBox="0 0 15 23"><path d="M1.5 1.5v16.8l3.8-3.7 2.7 6.3 2.5-1.1-2.7-6.1h5.2z" fill="#fff" stroke="#000" stroke-width="1.2" stroke-linejoin="round"/></svg>
<div style="left:3px;top:707px;width:1345px;height:26px;border:1px solid #c9c9c9;background:#efefef"></div>
<svg style="left:7px;top:712px" width="16" height="17" viewBox="0 0 16 17" ><rect x=".5" y=".5" width="13" height="15" fill="url(#gDoc)" stroke="#5c6c7c" stroke-width="1"/><rect x="0" y="0" width="14" height="3" fill="url(#gTitleD)"/><rect x="1" y="1" width="11" height="1" fill="#58e8f0" opacity=".8"/><path d="M3 6.5h8M3 8.5h8M3 10.5h8M3 12.5h8" stroke="#66707c" stroke-width="1" shape-rendering="crispEdges"/></svg>
<span class="t" style="left:27.8px;top:713.3px;line-height:16px;font-size:12.4px;color:#555;letter-spacing:0.456px;">Output</span>
<svg style="left:1278px;top:717px" width="9" height="9" viewBox="0 0 9 9" ><rect x=".5" y=".5" width="8" height="8" fill="#f6f6f6" stroke="#000" stroke-width="1"/><rect x="0" y="0" width="9" height="2" fill="#000"/></svg>
<svg style="left:1303px;top:716px" width="11" height="11" viewBox="0 0 11 11" ><rect x=".5" y=".5" width="10" height="10" rx="2" fill="#f1f1f1" stroke="#6e6b68" stroke-width="1"/><rect x="4.5" y="2.5" width="4" height="4" rx=".8" fill="none" stroke="#6e6b68" stroke-width="1"/><rect x="2.5" y="4.5" width="4" height="4" rx=".8" fill="#f1f1f1" stroke="#6e6b68" stroke-width="1"/></svg>
<svg style="left:1329px;top:716px" width="11" height="11" viewBox="0 0 11 11" ><rect x=".5" y=".5" width="10" height="10" rx="2" fill="#f1f1f1" stroke="#6e6b68" stroke-width="1"/><path d="M2.9 2.9l5.2 5.2M8.1 2.9L2.9 8.1" stroke="#55534f" stroke-width="1.8"/></svg>
<div style="left:3px;top:735px;width:1345px;height:82px;background:#fff;border-top:1.5px solid #9c9c9c;border-left:1px solid #9f9f9f"></div>
<div style="left:4px;top:736px;width:1330.5px;height:80.5px;overflow:hidden"><pre style="left:6px;top:-8.7px;height:17.2414px;font-size:15px;line-height:17.2414px;transform:scaleY(0.87);transform-origin:0 0;color:#000">Python 3.6.9 (default, Jan 26 2021, 15:33:00) </pre><pre style="left:6px;top:6.3px;height:17.2414px;font-size:15px;line-height:17.2414px;transform:scaleY(0.87);transform-origin:0 0;color:#000">[GCC 8.4.0]</pre><pre style="left:6px;top:21.3px;height:17.2414px;font-size:15px;line-height:17.2414px;transform:scaleY(0.87);transform-origin:0 0;color:#000">IDAPython 64-bit v7.4.0 final (serial 0) (c) The IDAPython Team &lt;idapython@googlegroups.com&gt;</pre><pre style="left:6px;top:51.3px;height:17.2414px;font-size:15px;line-height:17.2414px;transform:scaleY(0.87);transform-origin:0 0;color:#000">refreshing....</pre><pre style="left:6px;top:66.3px;height:17.2414px;font-size:15px;line-height:17.2414px;transform:scaleY(0.87);transform-origin:0 0;color:#000">refreshing....</pre></div>
<svg style="left:4px;top:771px" width="860" height="15" viewBox="0 0 860 15"><path d="M6.90 6.9h7.2M15.90 6.9h7.2M24.90 6.9h7.2M33.90 6.9h7.2M42.90 6.9h7.2M51.90 6.9h7.2M60.90 6.9h7.2M69.90 6.9h7.2M78.90 6.9h7.2M87.90 6.9h7.2M96.90 6.9h7.2M105.90 6.9h7.2M114.90 6.9h7.2M123.90 6.9h7.2M132.90 6.9h7.2M141.90 6.9h7.2M150.90 6.9h7.2M159.90 6.9h7.2M168.90 6.9h7.2M177.90 6.9h7.2M186.90 6.9h7.2M195.90 6.9h7.2M204.90 6.9h7.2M213.90 6.9h7.2M222.90 6.9h7.2M231.90 6.9h7.2M240.90 6.9h7.2M249.90 6.9h7.2M258.90 6.9h7.2M267.90 6.9h7.2M276.90 6.9h7.2M285.90 6.9h7.2M294.90 6.9h7.2M303.90 6.9h7.2M312.90 6.9h7.2M321.90 6.9h7.2M330.90 6.9h7.2M339.90 6.9h7.2M348.90 6.9h7.2M357.90 6.9h7.2M366.90 6.9h7.2M375.90 6.9h7.2M384.90 6.9h7.2M393.90 6.9h7.2M402.90 6.9h7.2M411.90 6.9h7.2M420.90 6.9h7.2M429.90 6.9h7.2M438.90 6.9h7.2M447.90 6.9h7.2M456.90 6.9h7.2M465.90 6.9h7.2M474.90 6.9h7.2M483.90 6.9h7.2M492.90 6.9h7.2M501.90 6.9h7.2M510.90 6.9h7.2M519.90 6.9h7.2M528.90 6.9h7.2M537.90 6.9h7.2M546.90 6.9h7.2M555.90 6.9h7.2M564.90 6.9h7.2M573.90 6.9h7.2M582.90 6.9h7.2M591.90 6.9h7.2M600.90 6.9h7.2M609.90 6.9h7.2M618.90 6.9h7.2M627.90 6.9h7.2M636.90 6.9h7.2M645.90 6.9h7.2M654.90 6.9h7.2M663.90 6.9h7.2M672.90 6.9h7.2M681.90 6.9h7.2M690.90 6.9h7.2M699.90 6.9h7.2M708.90 6.9h7.2M717.90 6.9h7.2M726.90 6.9h7.2M735.90 6.9h7.2M744.90 6.9h7.2M753.90 6.9h7.2M762.90 6.9h7.2M771.90 6.9h7.2M780.90 6.9h7.2M789.90 6.9h7.2M798.90 6.9h7.2M807.90 6.9h7.2M816.90 6.9h7.2M825.90 6.9h7.2M834.90 6.9h7.2" fill="none" stroke="#000" stroke-width="1.7"/></svg>
<div style="left:1334px;top:736px;width:14px;height:81px;background:#fcfcfc;border-left:1px solid #dedede"></div>
<div style="left:1338px;top:771px;width:6px;height:30px;background:#b4b4b4;border-radius:3px"></div>
<div style="left:5px;top:818px;width:54px;height:28px;background:#fbfcfc;border:1px solid #d0d0d0;border-radius:3.5px"></div>
<span class="t" style="left:11.6px;top:825.2px;line-height:16px;font-size:12.4px;color:#555;letter-spacing:0.139px;">Python</span>
<div style="left:63px;top:818px;width:1284px;height:28px;background:#efefef;border:1px solid #cfcfcf;border-radius:3px"></div>
<div class="sb" style="left:3px;top:849px;width:83px;height:18px;"><span style="bottom:0.7px">AU:  idle</span></div>
<div class="sb" style="left:89px;top:849px;width:73px;height:18px;"><span style="bottom:0.7px">Down</span></div>
<div class="sb" style="left:165px;top:849px;width:83px;height:18px;"><span style="bottom:0.7px">Disk: 747GB</span></div>
</div></body></html>
